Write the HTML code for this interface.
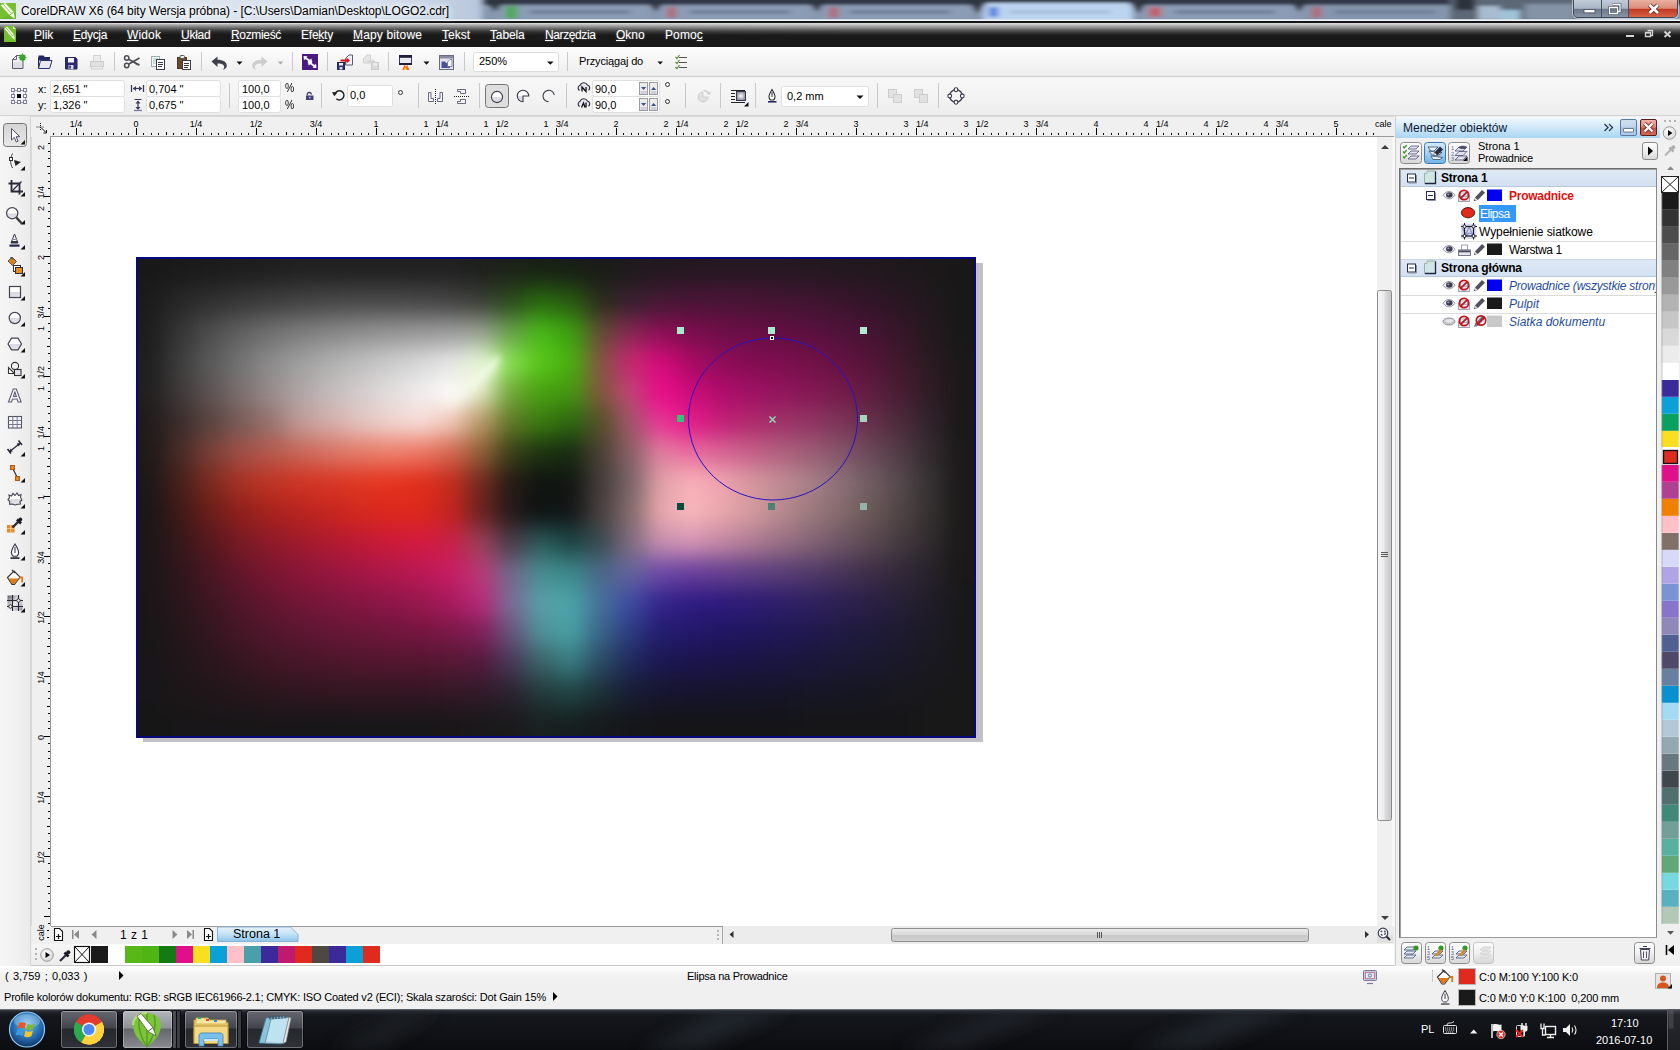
<!DOCTYPE html>
<html lang="pl"><head><meta charset="utf-8"><title>CorelDRAW X6</title>
<style>
html,body{margin:0;padding:0;background:#f0f0f0;}
body{width:1680px;height:1050px;overflow:hidden;font-family:"Liberation Sans",sans-serif;font-size:12px;color:#000;}
#root{position:relative;width:1680px;height:1050px;overflow:hidden;background:#f0f0f0;}
.abs{position:absolute;}
#root div,#root span,#root svg{position:absolute;box-sizing:border-box;}
.t{white-space:nowrap;line-height:1;}
.mi{top:7px;font-size:12px;color:#fff;text-shadow:0 0 2px rgba(255,255,255,0.35);}
.mi u{text-decoration:underline;text-underline-offset:1px;}
.rl{font-size:9px;color:#000;height:9px;word-spacing:5px;}
.tt{font-size:11px;color:#000;}
.tr{font-size:12px;color:#000;}

</style></head>
<body>
<div id="root">
<!-- titlebar.html -->
<div id="titlebar" style="left:0;top:0;width:1680px;height:22px;overflow:hidden;background:#8c9db6;">
  <!-- blurred browser tabs behind aero glass -->
  <svg width="1680" height="22" style="left:0;top:0" viewBox="0 0 1680 22">
    <defs>
      <filter id="tb" x="-5%" y="-50%" width="110%" height="200%"><feGaussianBlur stdDeviation="3 1.6"/></filter>
      <linearGradient id="tleft" x1="0" x2="1"><stop offset="0" stop-color="#e3e9f2"/><stop offset="0.8" stop-color="#d3deec"/><stop offset="1" stop-color="#b7c6db"/></linearGradient>
    </defs>
    <rect x="0" y="0" width="1680" height="22" fill="#8797b0"/>
    <g filter="url(#tb)">
      <rect x="470" y="-5" width="1220" height="10" fill="#313946"/>
      <rect x="-10" y="-4" width="492" height="30" fill="url(#tleft)"/>
      <rect x="500" y="5" width="150" height="20" fill="#8b9cb6"/>
      <rect x="661" y="5" width="150" height="20" fill="#8b9cb6"/>
      <rect x="822" y="5" width="150" height="20" fill="#8b9cb6"/>
      <rect x="983" y="3" width="150" height="22" fill="#bcd4f0"/>
      <rect x="1144" y="5" width="150" height="20" fill="#8b9cb6"/>
      <rect x="1305" y="5" width="145" height="20" fill="#8595ad"/>
      <polygon points="484,-2 506,-2 496,12" fill="#2e3540"/>
      <polygon points="645,-2 667,-2 656,12" fill="#2e3540"/>
      <polygon points="806,-2 828,-2 817,12" fill="#2e3540"/>
      <polygon points="966,-2 990,-2 978,14" fill="#2e3540"/>
      <polygon points="1126,-2 1150,-2 1138,14" fill="#2e3540"/>
      <polygon points="1288,-2 1310,-2 1299,12" fill="#2e3540"/>
      <rect x="1450" y="-2" width="130" height="26" fill="#5d6877"/>
      <rect x="1455" y="-4" width="20" height="14" fill="#2b313b"/>
      <rect x="1478" y="6" width="22" height="14" fill="#a9bccf"/>
      <rect x="1500" y="10" width="20" height="12" fill="#9fc3d8"/>
      <rect x="1525" y="4" width="50" height="16" fill="#8493a6"/>
      <rect x="505" y="6" width="13" height="13" fill="#55a860"/>
      <rect x="667" y="7" width="9" height="11" fill="#b06a78"/>
      <rect x="829" y="7" width="9" height="11" fill="#b06a78"/>
      <rect x="989" y="7" width="9" height="10" fill="#4f7fdc"/>
      <rect x="1149" y="7" width="12" height="10" fill="#c0626a"/>
      <rect x="1312" y="7" width="9" height="11" fill="#b06a78"/>
      <rect x="530" y="10" width="100" height="4" fill="#6f7f99"/>
      <rect x="690" y="10" width="100" height="4" fill="#6f7f99"/>
      <rect x="850" y="10" width="100" height="4" fill="#6f7f99"/>
      <rect x="1010" y="10" width="100" height="4" fill="#a7bfdc"/>
      <rect x="1175" y="10" width="100" height="4" fill="#6f7f99"/>
      <rect x="1335" y="10" width="100" height="4" fill="#6f7f99"/>
    </g>
    <rect x="0" y="19" width="1680" height="1" fill="#dfe6ef" opacity="0.850"/>
    <rect x="0" y="20" width="1680" height="1" fill="#f1f5f9"/>
    <rect x="0" y="21" width="1680" height="1" fill="#131518"/>
  </svg>
  <!-- app icon -->
  <svg width="17" height="17" style="left:0;top:3px" viewBox="0 0 17 17">
    <rect x="0" y="0" width="16" height="16" fill="#74c02f"/>
    <path d="M0 16L16 16L16 9z" fill="#69b52b"/>
    <path d="M0.700 2.200L5.200 0.100L13.600 8.900L9.300 11.800z" fill="#fbfff4"/>
    <path d="M9.800 12.600L13.900 9.700L14.800 15.600z" fill="#fbfff4"/>
    <path d="M3 1.200L11.500 10.300" stroke="#74c02f" stroke-width="0.900"/>
  </svg>
  <span class="t" id="titletext" style="left:21px;top:5px;font-size:12px;color:#000;text-shadow:0 0 6px #fff,0 0 8px #fff,0 0 10px #fff;letter-spacing:-0.047px;">CorelDRAW X6 (64 bity Wersja próbna) - [C:\Users\Damian\Desktop\LOGO2.cdr]</span>
  <!-- window buttons -->
  <div style="left:1573px;top:-1px;width:105px;height:19px;border:1px solid #3d4652;border-radius:0 0 5px 5px;overflow:hidden;box-shadow:0 0 0 1px rgba(255,255,255,0.500);">
    <div style="left:0;top:0;width:28px;height:18px;background:linear-gradient(#c2ccd9 0%,#a9b5c6 46%,#6d798a 52%,#8b98aa 100%);border-right:1px solid #46505e;"></div>
    <div style="left:28px;top:0;width:27px;height:18px;background:linear-gradient(#c2ccd9 0%,#a9b5c6 46%,#6d798a 52%,#8b98aa 100%);border-right:1px solid #46505e;"></div>
    <div style="left:55px;top:0;width:49px;height:18px;background:linear-gradient(#e9b1a3 0%,#dc8a76 46%,#c23a24 52%,#d8694a 100%);"></div>
    <svg width="105" height="19" style="left:-1px;top:0" viewBox="1573 -1 105 19">
      <rect x="1584" y="8.500" width="11" height="3.400" fill="#fff" stroke="#4a5362" stroke-width="0.900"/>
      <path d="M1612.500 3.500h7.500v7h-2.500M1609.500 6.500h8v6h-8z" fill="none" stroke="#444d5a" stroke-width="2.600"/>
      <path d="M1612.500 3.500h7.500v7h-2.500M1609.500 6.500h8v6h-8z" fill="none" stroke="#fff" stroke-width="1.300"/>
      <path d="M1649.500 4l8.500 8M1658 4l-8.500 8" stroke="#5b2a22" stroke-width="4.400" stroke-linecap="butt"/>
      <path d="M1649.500 4l8.500 8M1658 4l-8.500 8" stroke="#fff" stroke-width="2.700" stroke-linecap="butt"/>
    </svg>
  </div>
</div>

<!-- menubar.html -->
<div id="menubar" style="left:0;top:22px;width:1680px;height:25px;background:#191919;">
  <div style="left:0;top:0;width:1680px;height:13px;background:linear-gradient(#141414 0px,#141414 0.9px,#e2e2e2 1px,#d0d0d0 1.9px,#b0b0b0 2.5px,#8c8c8c 4px,#646464 6px,#404040 8px,#282828 10px,#1c1c1c 12px,#191919 13px);"></div>
  <div style="left:0;top:2px;width:1680px;height:12px;background:linear-gradient(rgba(235,235,235,0.500) 0px,rgba(200,200,200,0.400) 3px,rgba(150,150,150,0.250) 7px,rgba(80,80,80,0) 12px);-webkit-mask-image:linear-gradient(90deg,rgba(0,0,0,0) 0,rgba(0,0,0,0.300) 25%,#000 50%,#000 100%);mask-image:linear-gradient(90deg,rgba(0,0,0,0) 0,rgba(0,0,0,0.300) 25%,#000 50%,#000 100%);"></div>
  <svg width="13" height="17" style="left:4px;top:4px" viewBox="0 0 13 17">
    <path d="M0 0h9l3 3v13H0z" fill="#74c02f"/>
    <path d="M9 0l3 3h-3z" fill="#d8efc0"/>
    <path d="M0.500 2.600L3.100 0.700L9.800 8.300L6.700 10.200z" fill="#fbfff4"/>
    <path d="M7.200 10.900L10.100 8.900L10.800 13.800z" fill="#fbfff4"/>
    <path d="M1.900 1.700L8.300 9.200" stroke="#74c02f" stroke-width="0.800"/>
  </svg>
  <span class="t mi" style="left:34px"><u>P</u>lik</span>
  <span class="t mi" style="left:73px;letter-spacing:-0.33px"><u>E</u>dycja</span>
  <span class="t mi" style="left:127px;letter-spacing:0.14px"><u>W</u>idok</span>
  <span class="t mi" style="left:181px;letter-spacing:-0.24px"><u>U</u>kład</span>
  <span class="t mi" style="left:231px;letter-spacing:-0.34px"><u>R</u>ozmieść</span>
  <span class="t mi" style="left:301px;letter-spacing:-0.23px">Efe<u>k</u>ty</span>
  <span class="t mi" style="left:353px;letter-spacing:0.15px"><u>M</u>apy bitowe</span>
  <span class="t mi" style="left:442px"><u>T</u>ekst</span>
  <span class="t mi" style="left:490px;letter-spacing:-0.15px"><u>T</u>abela</span>
  <span class="t mi" style="left:545px;letter-spacing:-0.39px"><u>N</u>arzędzia</span>
  <span class="t mi" style="left:616px"><u>O</u>kno</span>
  <span class="t mi" style="left:665px;letter-spacing:0.1px">Pomo<u>c</u></span>
  <svg width="60" height="14" style="left:1620px;top:4px" viewBox="0 0 60 14">
    <rect x="6" y="9" width="8" height="2" fill="#d4d4d4"/>
    <path d="M27.500 4.500h5v5h-1.500M25.500 6.500h5v4h-5z" fill="none" stroke="#d4d4d4" stroke-width="1.300"/>
    <rect x="25" y="6" width="6" height="1.500" fill="#d4d4d4"/>
    <path d="M44.500 5.500l6 5.500M50.500 5.500l-6 5.500" stroke="#d4d4d4" stroke-width="1.900"/>
  </svg>
</div>

<!-- toolbar.html -->
<div id="toolbar" style="left:0;top:47px;width:1680px;height:30px;background:linear-gradient(#fdfdfd 0%,#f6f6f6 45%,#ececec 100%);border-bottom:1px solid #cfcfcf;"></div>
<svg id="tbicons" width="720" height="30" style="left:0;top:47px" viewBox="0 47 720 30">
  <defs>
    <linearGradient id="gPaper" x1="0" y1="0" x2="0" y2="1"><stop offset="0" stop-color="#ffffff"/><stop offset="1" stop-color="#d9d9e4"/></linearGradient>
  </defs>
  <!-- separators -->
  <g stroke="#c9c9c9" stroke-width="1" shape-rendering="crispEdges">
    <path d="M114.5 52v19M201.5 52v19M292.5 52v19M327.5 52v19M388.5 52v19M464.5 52v19M567.5 52v19"/>
  </g>
  <!-- new -->
  <path d="M12.5 59.5l4-4h6.5v13h-10.5z" fill="url(#gPaper)" stroke="#5d5d6b" stroke-width="1"/>
  <path d="M12.5 59.5h4v-4" fill="none" stroke="#5d5d6b" stroke-width="1"/>
  <rect x="13.5" y="62" width="8.5" height="6" fill="#dcdce6" opacity="0.8"/>
  <circle cx="22.5" cy="57.5" r="3.1" fill="#2f9a21"/>
  <path d="M22.5 53.6v7.8M18.6 57.5h7.8M19.8 54.8l5.4 5.4M25.2 54.8l-5.4 5.4" stroke="#3aa52a" stroke-width="1.1"/>
  <!-- open -->
  <path d="M38.5 57v-1.5h5l1.2 1.5h5.3v2.5h-11.5z" fill="#1f2558"/>
  <path d="M38.5 57.5h11v3h-11z" fill="#252c66"/>
  <path d="M38.5 68.5v-11" stroke="#1f2558" stroke-width="1"/>
  <path d="M40.5 60.5h11.5l-2.4 8h-11.1z" fill="#e9e9f0" stroke="#2b3270" stroke-width="1"/>
  <!-- save -->
  <path d="M65.5 57.5h10l1.5 1.5v10h-11.5z" fill="#2a2d74" stroke="#23265f" stroke-width="1"/>
  <rect x="68" y="58" width="6" height="4.5" fill="#f4f4fa"/>
  <rect x="68.5" y="65" width="5" height="4" fill="#d6d6e2"/>
  <rect x="69.2" y="65.6" width="1.6" height="3" fill="#2a2d74"/>
  <!-- print (disabled) -->
  <g opacity="0.9">
    <rect x="93.5" y="55.5" width="7" height="6" fill="#ececec" stroke="#cfcfcf"/>
    <rect x="90.5" y="61.5" width="13" height="5" fill="#dedede" stroke="#c8c8c8"/>
    <rect x="91.5" y="66.5" width="11" height="2.5" fill="#ececec" stroke="#cfcfcf"/>
  </g>
  <!-- cut -->
  <g fill="none" stroke="#4d4d55" stroke-width="1.5">
    <circle cx="126.7" cy="58" r="2.2"/><circle cx="126.7" cy="65.5" r="2.2"/>
  </g>
  <path d="M128.5 59.2l11 5.8M128.5 64.3l11-6.3" stroke="#4d4d55" stroke-width="1.6" fill="none"/>
  <path d="M131.5 61.8l8 3.7-2.5-.2z" fill="#4d4d55"/>
  <!-- copy -->
  <rect x="151.5" y="56.5" width="8" height="10" fill="#f2f5f5" stroke="#9fb0b5"/>
  <path d="M153 59h5M153 61h5M153 63h5" stroke="#a9c8c3" stroke-width="1"/>
  <rect x="156.5" y="59.500" width="8" height="10" fill="#ffffff" stroke="#3c3c46"/>
  <path d="M158 62.5h5M158 64.500h5M158 66.500h4" stroke="#3c3c46" stroke-width="1"/>
  <!-- paste -->
  <rect x="177.500" y="57.500" width="9" height="11" fill="#6a4a2b" stroke="#4e3520"/>
  <rect x="180" y="55.500" width="4.500" height="3" rx="1" fill="#e9e9e9" stroke="#555"/>
  <rect x="182.500" y="60.500" width="8" height="9" fill="#ffffff" stroke="#3c3c46"/>
  <path d="M184 63.500h5M184 65.500h5M184 67.500h4" stroke="#3c3c46" stroke-width="1"/>
  <!-- undo -->
  <path d="M211.500 61.500l6-5v3.200c5.500 0 9.300 2.300 9.300 6 0 2-1.500 3.600-4.300 4.200 1.300-1 1.700-1.900 1.700-3 0-2-2-3.300-6.700-3.300v3.300z" fill="#40404c"/>
  <path d="M236.500 61.500h6l-3 3.200z" fill="#111"/>
  <!-- redo disabled -->
  <path d="M267.500 61.500l-6-5v3.200c-5.500 0-9.300 2.300-9.300 6 0 2 1.500 3.600 4.300 4.200-1.300-1-1.700-1.900-1.700-3 0-2 2-3.300 6.700-3.300v3.300z" fill="#cdcdcd"/>
  <path d="M277.800 61.500h5.400l-2.700 3z" fill="#a8a8a8"/>
  <!-- purple icon -->
  <rect x="302" y="54" width="16" height="16" fill="#4a1a80"/>
  <path d="M303.500 56l4 .3-1 1.200 3.300 2.200 1.700-1.300.6 4.800-4.700-.5 1.300-1.500-3.300-2.300-1.400 1.300z" fill="#fff"/>
  <path d="M316.500 68l-4-.3 1-1.200-3.300-2.200-1.700 1.300-.6-4.800 4.700.5-1.300 1.500 3.300 2.300 1.400-1.300z" fill="#fff"/>
  <!-- import -->
  <path d="M345.500 58.500l3.500-3.500h3.500v10h-7z" fill="#f4f4f8" stroke="#5b5b72"/>
  <rect x="337.500" y="62.500" width="7" height="7" fill="#2a2d74" stroke="#23265f"/>
  <rect x="339" y="63" width="4" height="2.500" fill="#f0f0f6"/>
  <rect x="339.500" y="67" width="3" height="2.500" fill="#d6d6e2"/>
  <path d="M340.500 59.500h6v-2l3.500 3-3.500 3v-2h-6z" fill="#d9141c"/>
  <!-- export disabled -->
  <g opacity="0.85">
    <path d="M363.500 58.500l3.500-3.500h3.500v8h-7z" fill="#e3e3e3" stroke="#cbcbcb"/>
    <rect x="371.500" y="62.500" width="7" height="7" fill="#d4d4d4" stroke="#c6c6c6"/>
    <rect x="373" y="63" width="4" height="2.500" fill="#efefef"/>
    <path d="M367.500 60.500h5v-2l3 3-3 3v-2h-5z" fill="#cfcfcf"/>
  </g>
  <!-- app launcher -->
  <rect x="399.500" y="55.500" width="12" height="9" fill="#e9e9f2" stroke="#3b3b52"/>
  <rect x="399" y="55" width="13" height="2.800" fill="#1d1d3a"/>
  <rect x="399" y="63" width="13" height="2" fill="#1d1d3a"/>
  <path d="M402.500 70c0-2.500 1.500-3 2-5.500 1 1.200 1.200 1.800 1.300 2.500.5-.8.800-1.200 1.700-2 .2 2.500 1.700 3 1.700 5z" fill="#f26a1b"/>
  <path d="M404 70c0-1.500.8-2 1.400-3 .5 1 1.300 1.500 1.300 3z" fill="#ffd23c"/>
  <path d="M423.500 61.500h6l-3 3.200z" fill="#111"/>
  <!-- welcome -->
  <rect x="439.500" y="55.500" width="14" height="14" fill="#e4e4ee" stroke="#6b6b80"/>
  <rect x="440" y="56" width="13" height="2.500" fill="#8a8aa0"/>
  <path d="M441.500 61.500h3.500l1 1.500h4v5h-8.500z" fill="#4a4f9a"/>
  <path d="M447.500 62l2.500-2.500h2v7h-4.500z" fill="#f6f6fa" stroke="#6b6b80" stroke-width="0.8"/>
  <!-- zoom combo -->
  <rect x="473.500" y="52.500" width="85" height="19" rx="2" fill="#fff" stroke="#dcdcdc"/>
  <path d="M547 61.500h6.600l-3.300 3.300z" fill="#111"/>
  <!-- snap arrow -->
  <path d="M657.500 61.500h5.400l-2.700 3z" fill="#111"/>
  <!-- checklist -->
  <g stroke="#555" stroke-width="1" shape-rendering="crispEdges"><path d="M679 57.500h8M679 62.500h8M679 67.500h8"/></g>
  <g stroke="#5c8a3a" stroke-width="1.200" fill="none"><path d="M675.500 57l1.500 1.500 2.500-3.500M675.500 62l1.500 1.500 2.500-3.500M675.500 67l1.500 1.500 2.500-3.500"/></g>
</svg>
<span class="t tt" style="left:479px;top:56px;">250%</span>
<span class="t tt" id="snaptxt" style="left:579px;top:56px;letter-spacing:-0.15px;">Przyciągaj do</span>

<!-- propbar.html -->
<div id="propbar" style="left:0;top:78px;width:1680px;height:38px;background:linear-gradient(#f7f7f7 0%,#f3f3f3 50%,#ededed 100%);border-bottom:1px solid #d2d2d2;"></div>
<svg id="pbicons" width="1000" height="38" style="left:0;top:78px" viewBox="0 78 1000 38">
  <g stroke="#c9c9c9" stroke-width="1" shape-rendering="crispEdges">
    <path d="M229.500 83v25M321.500 83v25M418.500 83v25M479.500 83v25M566.500 83v25M685.500 83v25M720.500 83v25M755.500 83v25M877.500 83v25M938.500 83v25"/>
  </g>
  <!-- origin grid icon -->
  <g fill="#fff" stroke="#7c7c96" stroke-width="1" shape-rendering="crispEdges">
    <rect x="11.500" y="88.500" width="3" height="3"/><rect x="17.500" y="88.500" width="3" height="3"/><rect x="23.500" y="88.500" width="3" height="3"/>
    <rect x="11.500" y="94.500" width="3" height="3"/><rect x="23.500" y="94.500" width="3" height="3"/>
    <rect x="11.500" y="100.500" width="3" height="3"/><rect x="17.500" y="100.500" width="3" height="3"/><rect x="23.500" y="100.500" width="3" height="3"/>
  </g>
  <g stroke="#9a9ab0" stroke-width="1" shape-rendering="crispEdges"><path d="M15 90h2M21 90h2M15 102h2M21 102h2M13 92v2M13 98v2M25 92v2M25 98v2"/></g>
  <rect x="17" y="94" width="4" height="4" fill="#000"/>
  <!-- fields -->
  <g fill="#fff" stroke="#dfdfdf" stroke-width="1">
    <rect x="50.500" y="80.500" width="74" height="16" rx="2"/><rect x="50.500" y="96.500" width="74" height="16" rx="2"/>
    <rect x="146.500" y="80.500" width="74" height="16" rx="2"/><rect x="146.500" y="96.500" width="74" height="16" rx="2"/>
    <rect x="238.500" y="80.500" width="42" height="16" rx="2"/><rect x="238.500" y="96.500" width="42" height="16" rx="2"/>
    <rect x="347.500" y="85.500" width="45" height="21" rx="2"/>
    <rect x="592.500" y="80.500" width="67" height="16" rx="2"/><rect x="592.500" y="96.500" width="67" height="16" rx="2"/>
    <rect x="781.500" y="86.500" width="87" height="20" rx="2"/>
  </g>
  <!-- width / height icons -->
  <g stroke="#3a3a5a" stroke-width="1.200" fill="#3a3a5a">
    <path d="M131.500 85v7M143.500 85v7" stroke-width="1.300"/>
    <path d="M133 88.500h9" />
    <path d="M133 88.500l3-2.500v5zM142 88.500l-3-2.500v5z" stroke="none"/>
    <path d="M138 102v7" />
    <path d="M138 100.500l-2.500 3h5zM138 110l-2.500-3h5z" stroke="none"/>
  </g>
  <path d="M134.500 99.500h7" stroke="#3a3a5a" stroke-width="1"/>
  <path d="M134 110.500h8" stroke="#7a7aa8" stroke-width="1.300"/>
  <!-- lock -->
  <rect x="306" y="95.500" width="7.500" height="4.500" fill="#45427a"/>
  <path d="M307.300 95.500v-1a2 2 0 0 1 4 0" fill="none" stroke="#45427a" stroke-width="1.300"/>
  <rect x="309" y="96.800" width="1.400" height="1.600" fill="#c8c8e8"/>
  <!-- rotate -->
  <path d="M334.800 94.500a4.600 4.600 0 1 1 1.500 4.300" fill="none" stroke="#222" stroke-width="1.400"/>
  <path d="M332 92l5.500.4-3.300 3.800z" fill="#222"/>
  <!-- mirror H -->
  <g fill="#f4f4fa" stroke="#6a6a82" stroke-width="1"><path d="M428.500 92.500h2.500v6h2.500v3h-5zM442.500 92.500h-2.500v6h-2.500v3h5z"/></g>
  <path d="M435.500 89v16" stroke="#222" stroke-width="1" stroke-dasharray="1 1" shape-rendering="crispEdges"/>
  <!-- mirror V -->
  <g fill="#f4f4fa" stroke="#6a6a82" stroke-width="1"><path d="M457.500 89.500h8v4h-5v-2h-3zM457.500 103.500h8v-4h-5v2h-3z"/></g>
  <path d="M454 96.500h16" stroke="#222" stroke-width="1" stroke-dasharray="1 1" shape-rendering="crispEdges"/>
  <!-- ellipse / pie / arc -->
  <defs><linearGradient id="gBall" x1="0" y1="0" x2="0" y2="1"><stop offset="0.500" stop-color="#fff"/><stop offset="0.520" stop-color="#dcdce6"/></linearGradient></defs>
  <rect x="485.500" y="84.500" width="23" height="23" rx="3" fill="#dedede" stroke="#777"/>
  <circle cx="497" cy="97" r="5.600" fill="url(#gBall)" stroke="#3a3a46" stroke-width="1.100"/>
  <path d="M523 96h5.700a5.700 5.700 0 1 0-5.700 5.700z" fill="url(#gBall)" stroke="#3a3a46" stroke-width="1.100"/>
  <path d="M554.300 95a5.700 5.700 0 1 0-5.700 6.700" fill="none" stroke="#3a3a46" stroke-width="1.100"/>
  <!-- angle icons -->
  <g fill="#e6e6f0" stroke="#2a2a3a" stroke-width="1.100">
    <path d="M579.500 90.500a3 3 0 0 1 .5-5.300 4.200 4.200 0 0 1 7.500-.2 3 3 0 0 1 1 5.300"/>
    <path d="M579.500 106.500a3 3 0 0 1 .5-5.300 4.200 4.200 0 0 1 7.500-.2 3 3 0 0 1 1 5.300"/>
  </g>
  <path d="M582 91.500v-4.500l4 4.500v-4.500" fill="none" stroke="#111" stroke-width="1.300"/>
  <path d="M581.500 107.500l2-4.500 1.500 4.500 M586 107.500v-5" fill="none" stroke="#111" stroke-width="1.300"/>
  <!-- spinners -->
  <g fill="#ececec" stroke="#9c9c9c" stroke-width="1" shape-rendering="crispEdges">
    <rect x="639.500" y="82.500" width="8" height="12"/><rect x="649.500" y="82.500" width="8" height="12"/>
    <rect x="639.500" y="98.500" width="8" height="12"/><rect x="649.500" y="98.500" width="8" height="12"/>
  </g>
  <g fill="#3c50a0">
    <path d="M641 87h5.200l-2.600 3zM651 90h5.200l-2.600-3zM641 103h5.200l-2.600 3zM651 106h5.200l-2.600-3z"/>
  </g>
  <g fill="#d0d0dc"><rect x="640.500" y="91" width="6" height="3"/><rect x="650.500" y="91" width="6" height="3"/><rect x="640.500" y="107" width="6" height="3"/><rect x="650.500" y="107" width="6" height="3"/></g>
  <!-- degree marks -->
  <g fill="none" stroke="#333" stroke-width="1"><circle cx="400.500" cy="92.500" r="2"/><circle cx="667.500" cy="84.500" r="2"/><circle cx="667.500" cy="101.500" r="2"/></g>
  <!-- direction (disabled) -->
  <g fill="#e0e0e0" stroke="#cfcfcf" stroke-width="1"><path d="M703 97v-5a5 5 0 1 0 5 5z"/></g>
  <path d="M703.500 90.500a6 6 0 0 1 5.500 4" fill="none" stroke="#cfcfcf" stroke-width="1.400"/><path d="M707 94.500h3.500v-3.500z" fill="#cfcfcf"/>
  <!-- wrap icon -->
  <defs><radialGradient id="gWrap"><stop offset="0" stop-color="#fff"/><stop offset="1" stop-color="#8c8ca0"/></radialGradient></defs>
  <g stroke="#222" stroke-width="1" shape-rendering="crispEdges"><path d="M731 90.500h14M731 93.500h4M731 96.500h4M731 99.500h4M731 102.500h14"/></g>
  <rect x="736.500" y="91.500" width="9" height="9" fill="url(#gWrap)" stroke="#3a3a4a"/>
  <path d="M748.500 102v4.500h-4.500z" fill="#111"/>
  <!-- outline pen -->
  <path d="M772 89.500c-1.800 3-3 5-3 7.300 0 1.500.8 2.700 1.500 3.200h3c.7-.5 1.500-1.700 1.500-3.200 0-2.300-1.200-4.300-3-7.300z" fill="#fff" stroke="#2a2a3a" stroke-width="1.100"/>
  <path d="M772 92v5" stroke="#2a2a3a" stroke-width="1"/>
  <rect x="768" y="101" width="8.500" height="1.600" fill="#2a2a6a"/>
  <path d="M856.500 95.500h7l-3.500 3.600z" fill="#111"/>
  <!-- order icons (disabled) -->
  <g fill="#e2e2e2" stroke="#cdcdcd" stroke-width="1">
    <rect x="888.500" y="89.500" width="8" height="8"/><rect x="893.500" y="94.500" width="8" height="8"/>
    <rect x="914.500" y="89.500" width="8" height="8"/><rect x="919.500" y="94.500" width="8" height="8"/>
  </g>
  <!-- convert to curves -->
  <circle cx="956" cy="96" r="6.300" fill="none" stroke="#3a3a4a" stroke-width="1.300"/>
  <g fill="#fff" stroke="#3a3a4a" stroke-width="1.100"><circle cx="956" cy="89.700" r="1.900"/><circle cx="956" cy="102.300" r="1.900"/><circle cx="949.700" cy="96" r="1.900"/><circle cx="962.300" cy="96" r="1.900"/></g>
</svg>
<span class="t tt" style="left:38px;top:84px;">x:</span>
<span class="t tt" style="left:38px;top:100px;">y:</span>
<span class="t tt" style="left:53px;top:84px;">2,651 "</span>
<span class="t tt" style="left:53px;top:100px;">1,326 "</span>
<span class="t tt" style="left:149px;top:84px;">0,704 "</span>
<span class="t tt" style="left:149px;top:100px;">0,675 "</span>
<span class="t tt" style="left:242px;top:84px;">100,0</span>
<span class="t tt" style="left:242px;top:100px;">100,0</span>
<span class="t" style="left:285px;top:81px;font-size:13px;transform:scaleX(0.8);transform-origin:0 0;">%</span>
<span class="t" style="left:285px;top:98px;font-size:13px;transform:scaleX(0.8);transform-origin:0 0;">%</span>
<span class="t tt" style="left:350px;top:90px;">0,0</span>
<span class="t tt" style="left:595px;top:84px;">90,0</span>
<span class="t tt" style="left:595px;top:100px;">90,0</span>
<span class="t tt" style="left:787px;top:91px;">0,2 mm</span>

<!-- toolbox.html -->
<div id="toolbox" style="left:0;top:116px;width:31px;height:850px;background:linear-gradient(90deg,#f6f6f6,#f0f0f0 60%,#ebebeb);border-right:1px solid #d6d6d6;"></div>
<svg id="tools" width="31" height="520" style="left:0;top:116px" viewBox="0 116 31 520">
  <defs>
    <linearGradient id="gHalf" x1="0" y1="0" x2="0" y2="1"><stop offset="0.500" stop-color="#ffffff"/><stop offset="0.540" stop-color="#d9d9e3"/><stop offset="1" stop-color="#e6e6ee"/></linearGradient>
    <linearGradient id="gSel" x1="0" y1="0" x2="0" y2="1"><stop offset="0" stop-color="#d4d4d4"/><stop offset="1" stop-color="#e8e8e8"/></linearGradient>
  </defs>
  <!-- pick (selected) -->
  <rect x="3.500" y="123.500" width="23" height="23" rx="3" fill="url(#gSel)" stroke="#757575"/>
  <path d="M11.500 128.500v11.500l2.800-2.600 2 4.600 1.800-.8-2-4.500h3.700z" fill="#fff" stroke="#50506a" stroke-width="1"/>
  <!-- flyout triangles -->
  <g fill="#111">
    <path d="M25 140v4.500h-4.500z"/><path d="M25 166v4.500h-4.500z"/><path d="M25 192v4.500h-4.500z"/><path d="M25 220v4.500h-4.500z"/>
    <path d="M25 245v4.500h-4.500z"/><path d="M25 272v4.500h-4.500z"/><path d="M25 296v4.500h-4.500z"/><path d="M25 322v4.500h-4.500z"/>
    <path d="M25 348v4.500h-4.500z"/><path d="M25 374v4.500h-4.500z"/>
    <path d="M25 452v4.500h-4.500z"/><path d="M25 478v4.500h-4.500z"/><path d="M25 504v4.500h-4.500z"/><path d="M25 530v4.500h-4.500z"/>
    <path d="M25 556v4.500h-4.500z"/><path d="M25 582v4.500h-4.500z"/><path d="M25 608v4.500h-4.500z"/>
  </g>
  <!-- shape tool -->
  <path d="M12.500 153.500c-2.500 4.500-2.500 10 0 14.500" fill="none" stroke="#444" stroke-width="1"/>
  <rect x="9.500" y="157.500" width="3" height="3" fill="#fff" stroke="#333"/>
  <path d="M14 160l7 2-5.500 4z" fill="#222"/>
  <!-- crop -->
  <path d="M11.500 180v11.500h11.500M8.500 183.500h11v11" fill="none" stroke="#2a2a38" stroke-width="1.800"/>
  <path d="M12 191l9.500-9.500" stroke="#2a2a38" stroke-width="1.300"/>
  <!-- zoom -->
  <circle cx="12.200" cy="213.200" r="5.600" fill="url(#gHalf)" stroke="#444450" stroke-width="1.200"/>
  <path d="M16.300 217.500l5.500 6" stroke="#333" stroke-width="2.200"/>
  <!-- freehand -->
  <path d="M14.500 234l-3.500 9h7z" fill="#fff" stroke="#333345" stroke-width="1"/>
  <path d="M11.800 241h5.400l.8 2h-7z" fill="#333345"/>
  <rect x="9.500" y="244.500" width="10" height="2.200" fill="#26264a"/>
  <path d="M12 239.500h5" stroke="#8a8aa0" stroke-width="1"/>
  <!-- smart fill -->
  <path d="M8 261l4-4 4.500 4.500-4 4z" fill="#d8801e" stroke="#4a4a55" stroke-width="0.900"/>
  <path d="M10.500 257l2.500 2.500" stroke="#333" stroke-width="1"/>
  <rect x="13.500" y="265.500" width="7" height="6" fill="#fff" stroke="#333"/>
  <rect x="15.500" y="267.500" width="7" height="6" fill="#e88a24" stroke="#333"/>
  <!-- rectangle -->
  <rect x="9.500" y="286.500" width="11" height="11" fill="url(#gHalf)" stroke="#444450" stroke-width="1.200"/>
  <!-- ellipse -->
  <circle cx="14.800" cy="318" r="5.600" fill="url(#gHalf)" stroke="#444450" stroke-width="1.200"/>
  <!-- polygon -->
  <path d="M8 344l3.500-5.800h6.500l3.500 5.800-3.500 5.800h-6.500z" fill="url(#gHalf)" stroke="#444450" stroke-width="1.200"/>
  <!-- basic shapes -->
  <path d="M8.500 367.500v6h6z" fill="#fff" stroke="#333" stroke-width="1.100"/>
  <circle cx="15" cy="366" r="3.600" fill="#f4f4f8" stroke="#333" stroke-width="1.100"/>
  <rect x="14.500" y="369.500" width="6.500" height="6" fill="#e4e4ee" stroke="#333" stroke-width="1.100"/>
  <!-- text A -->
  <path d="M8.500 402l4.800-13h3l4.800 13h-3l-1-3h-4.600l-1 3zM13.400 396.500h3l-1.500-4.500z" fill="#fff" stroke="#5a5a72" stroke-width="1.100" fill-rule="evenodd"/>
  <!-- table -->
  <rect x="8.500" y="416.500" width="13" height="11.500" fill="#f4f4fa" stroke="#55556a" stroke-width="1.100"/>
  <path d="M8.500 420.500h13M8.500 424.500h13M12.800 416.500v11.500M17.200 416.500v11.500" stroke="#77778c" stroke-width="1"/>
  <!-- dimension -->
  <path d="M9 452l11.500-9" stroke="#2a2a3a" stroke-width="1.300"/>
  <path d="M7.500 449l3.500 4.500M18.500 440.500l3.500 4.500" stroke="#2a2a3a" stroke-width="1.600"/>
  <path d="M9 452l3.800-.6-2.200-2.800zM20.500 443l-3.800.6 2.200 2.800z" fill="#2a2a3a"/>
  <!-- connector -->
  <path d="M12.500 468l5 10" stroke="#333" stroke-width="1.200"/>
  <rect x="10.500" y="465.500" width="4" height="4" fill="#e8882a" stroke="#a85a12"/>
  <rect x="15.500" y="476.500" width="4" height="4" fill="#e8882a" stroke="#a85a12"/>
  <!-- blend / distort -->
  <path d="M9 495l2.500 1 1.500-2.500 2 2 2-2.500 1.500 2.500 2.500-1-.5 3 1.500 2.500-2 1.500.5 2.500-3 .3-2.500.7-2.500-1-3 .2.300-2.500-1.800-2 1.500-2z" fill="url(#gHalf)" stroke="#444455" stroke-width="1.100"/>
  <!-- eyedropper -->
  <rect x="7" y="525" width="7.500" height="7.500" fill="#e88a24"/>
  <path d="M7 528.500h7.500M10.700 525v7.500" stroke="#f6c58a" stroke-width="1"/>
  <path d="M12.500 527.500l6-6" stroke="#2c2c3a" stroke-width="2.400"/>
  <path d="M17 519.500l4 4" stroke="#1a1a24" stroke-width="2.600"/>
  <circle cx="20.300" cy="519.500" r="1.900" fill="#1a1a24"/>
  <!-- outline pen -->
  <path d="M15 544c-2.200 3.600-3.600 6-3.600 8.600 0 1.700 1 3 1.800 3.600h3.600c.8-.6 1.800-1.900 1.800-3.600 0-2.600-1.400-5-3.600-8.600z" fill="#fff" stroke="#333345" stroke-width="1.100"/>
  <path d="M15 547v6" stroke="#333345" stroke-width="1"/>
  <rect x="10.500" y="557.300" width="9" height="1.600" fill="#222"/>
  <!-- fill bucket -->
  <path d="M7.500 577.500l6.500-6.500 6 6-5.500 7.500h-2.500z" fill="#fff" stroke="#333" stroke-width="1.100"/>
  <path d="M8.500 578.500h10.500l-4.700 5.500h-2z" fill="#e07a14"/>
  <path d="M12 570l3 3" stroke="#333" stroke-width="1.100"/>
  <path d="M19.500 577.500h2.700v5" fill="none" stroke="#e07a14" stroke-width="1.800"/>
  <!-- mesh fill -->
  <defs><linearGradient id="gMesh" x1="0" y1="0" x2="1" y2="1"><stop offset="0" stop-color="#5a5a66"/><stop offset="0.500" stop-color="#f4f4f8"/><stop offset="1" stop-color="#8a8a98"/></linearGradient></defs>
  <rect x="7.500" y="595.500" width="15" height="15" fill="url(#gMesh)"/>
  <path d="M7 606.500h16M7 600.500h16M12.500 595v16M18.500 595v16" stroke="#2a2a36" stroke-width="1.100"/>
  <circle cx="18.500" cy="600.500" r="1.700" fill="#fff" stroke="#222" stroke-width="1"/>
  <circle cx="10.500" cy="606.500" r="1.700" fill="#fff" stroke="#222" stroke-width="1"/>
</svg>

<!-- rulers.html -->
<div id="hruler" style="left:31px;top:116px;width:1363px;height:21px;background:#f0f0f0;border-top:1px solid #d9d9d9;overflow:hidden;">
<svg width="1363" height="21" style="left:0;top:-1px" viewBox="31 116 1363 21" shape-rendering="crispEdges">
<rect x="50" y="136" width="1344" height="1" fill="#9a9a9a"/>
<rect x="53" y="133" width="1" height="2" fill="#000"/>
<rect x="61" y="133" width="1" height="2" fill="#000"/>
<rect x="68" y="133" width="1" height="2" fill="#000"/>
<rect x="76" y="128" width="1" height="7" fill="#000"/>
<rect x="83" y="133" width="1" height="2" fill="#000"/>
<rect x="91" y="133" width="1" height="2" fill="#000"/>
<rect x="98" y="133" width="1" height="2" fill="#000"/>
<rect x="106" y="132" width="1" height="3" fill="#000"/>
<rect x="113" y="133" width="1" height="2" fill="#000"/>
<rect x="121" y="133" width="1" height="2" fill="#000"/>
<rect x="128" y="133" width="1" height="2" fill="#000"/>
<rect x="136" y="128" width="1" height="7" fill="#000"/>
<rect x="143" y="133" width="1" height="2" fill="#000"/>
<rect x="151" y="133" width="1" height="2" fill="#000"/>
<rect x="158" y="133" width="1" height="2" fill="#000"/>
<rect x="166" y="132" width="1" height="3" fill="#000"/>
<rect x="173" y="133" width="1" height="2" fill="#000"/>
<rect x="181" y="133" width="1" height="2" fill="#000"/>
<rect x="188" y="133" width="1" height="2" fill="#000"/>
<rect x="196" y="128" width="1" height="7" fill="#000"/>
<rect x="203" y="133" width="1" height="2" fill="#000"/>
<rect x="211" y="133" width="1" height="2" fill="#000"/>
<rect x="218" y="133" width="1" height="2" fill="#000"/>
<rect x="226" y="132" width="1" height="3" fill="#000"/>
<rect x="233" y="133" width="1" height="2" fill="#000"/>
<rect x="241" y="133" width="1" height="2" fill="#000"/>
<rect x="248" y="133" width="1" height="2" fill="#000"/>
<rect x="256" y="128" width="1" height="7" fill="#000"/>
<rect x="263" y="133" width="1" height="2" fill="#000"/>
<rect x="271" y="133" width="1" height="2" fill="#000"/>
<rect x="278" y="133" width="1" height="2" fill="#000"/>
<rect x="286" y="132" width="1" height="3" fill="#000"/>
<rect x="293" y="133" width="1" height="2" fill="#000"/>
<rect x="301" y="133" width="1" height="2" fill="#000"/>
<rect x="308" y="133" width="1" height="2" fill="#000"/>
<rect x="316" y="128" width="1" height="7" fill="#000"/>
<rect x="323" y="133" width="1" height="2" fill="#000"/>
<rect x="331" y="133" width="1" height="2" fill="#000"/>
<rect x="338" y="133" width="1" height="2" fill="#000"/>
<rect x="346" y="132" width="1" height="3" fill="#000"/>
<rect x="353" y="133" width="1" height="2" fill="#000"/>
<rect x="361" y="133" width="1" height="2" fill="#000"/>
<rect x="368" y="133" width="1" height="2" fill="#000"/>
<rect x="376" y="128" width="1" height="7" fill="#000"/>
<rect x="383" y="133" width="1" height="2" fill="#000"/>
<rect x="391" y="133" width="1" height="2" fill="#000"/>
<rect x="398" y="133" width="1" height="2" fill="#000"/>
<rect x="406" y="132" width="1" height="3" fill="#000"/>
<rect x="413" y="133" width="1" height="2" fill="#000"/>
<rect x="421" y="133" width="1" height="2" fill="#000"/>
<rect x="428" y="133" width="1" height="2" fill="#000"/>
<rect x="436" y="128" width="1" height="7" fill="#000"/>
<rect x="443" y="133" width="1" height="2" fill="#000"/>
<rect x="451" y="133" width="1" height="2" fill="#000"/>
<rect x="458" y="133" width="1" height="2" fill="#000"/>
<rect x="466" y="132" width="1" height="3" fill="#000"/>
<rect x="473" y="133" width="1" height="2" fill="#000"/>
<rect x="481" y="133" width="1" height="2" fill="#000"/>
<rect x="488" y="133" width="1" height="2" fill="#000"/>
<rect x="496" y="128" width="1" height="7" fill="#000"/>
<rect x="503" y="133" width="1" height="2" fill="#000"/>
<rect x="511" y="133" width="1" height="2" fill="#000"/>
<rect x="518" y="133" width="1" height="2" fill="#000"/>
<rect x="526" y="132" width="1" height="3" fill="#000"/>
<rect x="533" y="133" width="1" height="2" fill="#000"/>
<rect x="541" y="133" width="1" height="2" fill="#000"/>
<rect x="548" y="133" width="1" height="2" fill="#000"/>
<rect x="556" y="128" width="1" height="7" fill="#000"/>
<rect x="563" y="133" width="1" height="2" fill="#000"/>
<rect x="571" y="133" width="1" height="2" fill="#000"/>
<rect x="578" y="133" width="1" height="2" fill="#000"/>
<rect x="586" y="132" width="1" height="3" fill="#000"/>
<rect x="593" y="133" width="1" height="2" fill="#000"/>
<rect x="601" y="133" width="1" height="2" fill="#000"/>
<rect x="608" y="133" width="1" height="2" fill="#000"/>
<rect x="616" y="128" width="1" height="7" fill="#000"/>
<rect x="623" y="133" width="1" height="2" fill="#000"/>
<rect x="631" y="133" width="1" height="2" fill="#000"/>
<rect x="638" y="133" width="1" height="2" fill="#000"/>
<rect x="646" y="132" width="1" height="3" fill="#000"/>
<rect x="653" y="133" width="1" height="2" fill="#000"/>
<rect x="661" y="133" width="1" height="2" fill="#000"/>
<rect x="668" y="133" width="1" height="2" fill="#000"/>
<rect x="676" y="128" width="1" height="7" fill="#000"/>
<rect x="683" y="133" width="1" height="2" fill="#000"/>
<rect x="691" y="133" width="1" height="2" fill="#000"/>
<rect x="698" y="133" width="1" height="2" fill="#000"/>
<rect x="706" y="132" width="1" height="3" fill="#000"/>
<rect x="713" y="133" width="1" height="2" fill="#000"/>
<rect x="721" y="133" width="1" height="2" fill="#000"/>
<rect x="728" y="133" width="1" height="2" fill="#000"/>
<rect x="736" y="128" width="1" height="7" fill="#000"/>
<rect x="743" y="133" width="1" height="2" fill="#000"/>
<rect x="751" y="133" width="1" height="2" fill="#000"/>
<rect x="758" y="133" width="1" height="2" fill="#000"/>
<rect x="766" y="132" width="1" height="3" fill="#000"/>
<rect x="773" y="133" width="1" height="2" fill="#000"/>
<rect x="781" y="133" width="1" height="2" fill="#000"/>
<rect x="788" y="133" width="1" height="2" fill="#000"/>
<rect x="796" y="128" width="1" height="7" fill="#000"/>
<rect x="803" y="133" width="1" height="2" fill="#000"/>
<rect x="811" y="133" width="1" height="2" fill="#000"/>
<rect x="818" y="133" width="1" height="2" fill="#000"/>
<rect x="826" y="132" width="1" height="3" fill="#000"/>
<rect x="833" y="133" width="1" height="2" fill="#000"/>
<rect x="841" y="133" width="1" height="2" fill="#000"/>
<rect x="848" y="133" width="1" height="2" fill="#000"/>
<rect x="856" y="128" width="1" height="7" fill="#000"/>
<rect x="863" y="133" width="1" height="2" fill="#000"/>
<rect x="871" y="133" width="1" height="2" fill="#000"/>
<rect x="878" y="133" width="1" height="2" fill="#000"/>
<rect x="886" y="132" width="1" height="3" fill="#000"/>
<rect x="893" y="133" width="1" height="2" fill="#000"/>
<rect x="901" y="133" width="1" height="2" fill="#000"/>
<rect x="908" y="133" width="1" height="2" fill="#000"/>
<rect x="916" y="128" width="1" height="7" fill="#000"/>
<rect x="923" y="133" width="1" height="2" fill="#000"/>
<rect x="931" y="133" width="1" height="2" fill="#000"/>
<rect x="938" y="133" width="1" height="2" fill="#000"/>
<rect x="946" y="132" width="1" height="3" fill="#000"/>
<rect x="953" y="133" width="1" height="2" fill="#000"/>
<rect x="961" y="133" width="1" height="2" fill="#000"/>
<rect x="968" y="133" width="1" height="2" fill="#000"/>
<rect x="976" y="128" width="1" height="7" fill="#000"/>
<rect x="983" y="133" width="1" height="2" fill="#000"/>
<rect x="991" y="133" width="1" height="2" fill="#000"/>
<rect x="998" y="133" width="1" height="2" fill="#000"/>
<rect x="1006" y="132" width="1" height="3" fill="#000"/>
<rect x="1013" y="133" width="1" height="2" fill="#000"/>
<rect x="1021" y="133" width="1" height="2" fill="#000"/>
<rect x="1028" y="133" width="1" height="2" fill="#000"/>
<rect x="1036" y="128" width="1" height="7" fill="#000"/>
<rect x="1043" y="133" width="1" height="2" fill="#000"/>
<rect x="1051" y="133" width="1" height="2" fill="#000"/>
<rect x="1058" y="133" width="1" height="2" fill="#000"/>
<rect x="1066" y="132" width="1" height="3" fill="#000"/>
<rect x="1073" y="133" width="1" height="2" fill="#000"/>
<rect x="1081" y="133" width="1" height="2" fill="#000"/>
<rect x="1088" y="133" width="1" height="2" fill="#000"/>
<rect x="1096" y="128" width="1" height="7" fill="#000"/>
<rect x="1103" y="133" width="1" height="2" fill="#000"/>
<rect x="1111" y="133" width="1" height="2" fill="#000"/>
<rect x="1118" y="133" width="1" height="2" fill="#000"/>
<rect x="1126" y="132" width="1" height="3" fill="#000"/>
<rect x="1133" y="133" width="1" height="2" fill="#000"/>
<rect x="1141" y="133" width="1" height="2" fill="#000"/>
<rect x="1148" y="133" width="1" height="2" fill="#000"/>
<rect x="1156" y="128" width="1" height="7" fill="#000"/>
<rect x="1163" y="133" width="1" height="2" fill="#000"/>
<rect x="1171" y="133" width="1" height="2" fill="#000"/>
<rect x="1178" y="133" width="1" height="2" fill="#000"/>
<rect x="1186" y="132" width="1" height="3" fill="#000"/>
<rect x="1193" y="133" width="1" height="2" fill="#000"/>
<rect x="1201" y="133" width="1" height="2" fill="#000"/>
<rect x="1208" y="133" width="1" height="2" fill="#000"/>
<rect x="1216" y="128" width="1" height="7" fill="#000"/>
<rect x="1223" y="133" width="1" height="2" fill="#000"/>
<rect x="1231" y="133" width="1" height="2" fill="#000"/>
<rect x="1238" y="133" width="1" height="2" fill="#000"/>
<rect x="1246" y="132" width="1" height="3" fill="#000"/>
<rect x="1253" y="133" width="1" height="2" fill="#000"/>
<rect x="1261" y="133" width="1" height="2" fill="#000"/>
<rect x="1268" y="133" width="1" height="2" fill="#000"/>
<rect x="1276" y="128" width="1" height="7" fill="#000"/>
<rect x="1283" y="133" width="1" height="2" fill="#000"/>
<rect x="1291" y="133" width="1" height="2" fill="#000"/>
<rect x="1298" y="133" width="1" height="2" fill="#000"/>
<rect x="1306" y="132" width="1" height="3" fill="#000"/>
<rect x="1313" y="133" width="1" height="2" fill="#000"/>
<rect x="1321" y="133" width="1" height="2" fill="#000"/>
<rect x="1328" y="133" width="1" height="2" fill="#000"/>
<rect x="1336" y="128" width="1" height="7" fill="#000"/>
<rect x="1343" y="133" width="1" height="2" fill="#000"/>
<rect x="1351" y="133" width="1" height="2" fill="#000"/>
<rect x="1358" y="133" width="1" height="2" fill="#000"/>
<rect x="1366" y="132" width="1" height="3" fill="#000"/>
<rect x="1373" y="133" width="1" height="2" fill="#000"/>
</svg>
<span class="t rl" style="left:15px;top:3px;width:60px;text-align:center;">1/4</span>
<span class="t rl" style="left:75px;top:3px;width:60px;text-align:center;">0</span>
<span class="t rl" style="left:135px;top:3px;width:60px;text-align:center;">1/4</span>
<span class="t rl" style="left:195px;top:3px;width:60px;text-align:center;">1/2</span>
<span class="t rl" style="left:255px;top:3px;width:60px;text-align:center;">3/4</span>
<span class="t rl" style="left:315px;top:3px;width:60px;text-align:center;">1</span>
<span class="t rl" style="left:375px;top:3px;width:60px;text-align:center;">1&nbsp;1/4</span>
<span class="t rl" style="left:435px;top:3px;width:60px;text-align:center;">1&nbsp;1/2</span>
<span class="t rl" style="left:495px;top:3px;width:60px;text-align:center;">1&nbsp;3/4</span>
<span class="t rl" style="left:555px;top:3px;width:60px;text-align:center;">2</span>
<span class="t rl" style="left:615px;top:3px;width:60px;text-align:center;">2&nbsp;1/4</span>
<span class="t rl" style="left:675px;top:3px;width:60px;text-align:center;">2&nbsp;1/2</span>
<span class="t rl" style="left:735px;top:3px;width:60px;text-align:center;">2&nbsp;3/4</span>
<span class="t rl" style="left:795px;top:3px;width:60px;text-align:center;">3</span>
<span class="t rl" style="left:855px;top:3px;width:60px;text-align:center;">3&nbsp;1/4</span>
<span class="t rl" style="left:915px;top:3px;width:60px;text-align:center;">3&nbsp;1/2</span>
<span class="t rl" style="left:975px;top:3px;width:60px;text-align:center;">3&nbsp;3/4</span>
<span class="t rl" style="left:1035px;top:3px;width:60px;text-align:center;">4</span>
<span class="t rl" style="left:1095px;top:3px;width:60px;text-align:center;">4&nbsp;1/4</span>
<span class="t rl" style="left:1155px;top:3px;width:60px;text-align:center;">4&nbsp;1/2</span>
<span class="t rl" style="left:1215px;top:3px;width:60px;text-align:center;">4&nbsp;3/4</span>
<span class="t rl" style="left:1275px;top:3px;width:60px;text-align:center;">5</span>
<span class="t rl" style="left:1344px;top:3px;">cale</span>
</div>
<div style="left:31px;top:117px;width:19px;height:19px;background:#f0f0f0;"></div>
<svg width="16" height="16" style="left:35px;top:121px" viewBox="0 0 16 16"><path d="M5.500 2v8M1.500 6h8" stroke="#111" stroke-width="1" stroke-dasharray="1 1"/><path d="M6.500 7l4.500 4.500M11.500 9v3h-3" stroke="#111" stroke-width="1" fill="none"/></svg>
<div id="vruler" style="left:31px;top:137px;width:20px;height:789px;background:#f0f0f0;border-left:1px solid #d9d9d9;overflow:hidden;">
<svg width="20" height="789" style="left:-1px;top:0" viewBox="31 137 20 789" shape-rendering="crispEdges">
<rect x="50" y="137" width="1" height="789" fill="#9a9a9a"/>
<rect x="48" y="923" width="2" height="1" fill="#000"/>
<rect x="44" y="916" width="6" height="1" fill="#000"/>
<rect x="48" y="908" width="2" height="1" fill="#000"/>
<rect x="48" y="901" width="2" height="1" fill="#000"/>
<rect x="48" y="893" width="2" height="1" fill="#000"/>
<rect x="47" y="886" width="3" height="1" fill="#000"/>
<rect x="48" y="878" width="2" height="1" fill="#000"/>
<rect x="48" y="871" width="2" height="1" fill="#000"/>
<rect x="48" y="863" width="2" height="1" fill="#000"/>
<rect x="44" y="856" width="6" height="1" fill="#000"/>
<rect x="48" y="848" width="2" height="1" fill="#000"/>
<rect x="48" y="841" width="2" height="1" fill="#000"/>
<rect x="48" y="833" width="2" height="1" fill="#000"/>
<rect x="47" y="826" width="3" height="1" fill="#000"/>
<rect x="48" y="818" width="2" height="1" fill="#000"/>
<rect x="48" y="811" width="2" height="1" fill="#000"/>
<rect x="48" y="803" width="2" height="1" fill="#000"/>
<rect x="44" y="796" width="6" height="1" fill="#000"/>
<rect x="48" y="788" width="2" height="1" fill="#000"/>
<rect x="48" y="781" width="2" height="1" fill="#000"/>
<rect x="48" y="773" width="2" height="1" fill="#000"/>
<rect x="47" y="766" width="3" height="1" fill="#000"/>
<rect x="48" y="758" width="2" height="1" fill="#000"/>
<rect x="48" y="751" width="2" height="1" fill="#000"/>
<rect x="48" y="743" width="2" height="1" fill="#000"/>
<rect x="44" y="736" width="6" height="1" fill="#000"/>
<rect x="48" y="728" width="2" height="1" fill="#000"/>
<rect x="48" y="721" width="2" height="1" fill="#000"/>
<rect x="48" y="713" width="2" height="1" fill="#000"/>
<rect x="47" y="706" width="3" height="1" fill="#000"/>
<rect x="48" y="698" width="2" height="1" fill="#000"/>
<rect x="48" y="691" width="2" height="1" fill="#000"/>
<rect x="48" y="683" width="2" height="1" fill="#000"/>
<rect x="44" y="676" width="6" height="1" fill="#000"/>
<rect x="48" y="668" width="2" height="1" fill="#000"/>
<rect x="48" y="661" width="2" height="1" fill="#000"/>
<rect x="48" y="653" width="2" height="1" fill="#000"/>
<rect x="47" y="646" width="3" height="1" fill="#000"/>
<rect x="48" y="638" width="2" height="1" fill="#000"/>
<rect x="48" y="631" width="2" height="1" fill="#000"/>
<rect x="48" y="623" width="2" height="1" fill="#000"/>
<rect x="44" y="616" width="6" height="1" fill="#000"/>
<rect x="48" y="608" width="2" height="1" fill="#000"/>
<rect x="48" y="601" width="2" height="1" fill="#000"/>
<rect x="48" y="593" width="2" height="1" fill="#000"/>
<rect x="47" y="586" width="3" height="1" fill="#000"/>
<rect x="48" y="578" width="2" height="1" fill="#000"/>
<rect x="48" y="571" width="2" height="1" fill="#000"/>
<rect x="48" y="563" width="2" height="1" fill="#000"/>
<rect x="44" y="556" width="6" height="1" fill="#000"/>
<rect x="48" y="548" width="2" height="1" fill="#000"/>
<rect x="48" y="541" width="2" height="1" fill="#000"/>
<rect x="48" y="533" width="2" height="1" fill="#000"/>
<rect x="47" y="526" width="3" height="1" fill="#000"/>
<rect x="48" y="518" width="2" height="1" fill="#000"/>
<rect x="48" y="511" width="2" height="1" fill="#000"/>
<rect x="48" y="503" width="2" height="1" fill="#000"/>
<rect x="44" y="496" width="6" height="1" fill="#000"/>
<rect x="48" y="488" width="2" height="1" fill="#000"/>
<rect x="48" y="481" width="2" height="1" fill="#000"/>
<rect x="48" y="473" width="2" height="1" fill="#000"/>
<rect x="47" y="466" width="3" height="1" fill="#000"/>
<rect x="48" y="458" width="2" height="1" fill="#000"/>
<rect x="48" y="451" width="2" height="1" fill="#000"/>
<rect x="48" y="443" width="2" height="1" fill="#000"/>
<rect x="44" y="436" width="6" height="1" fill="#000"/>
<rect x="48" y="428" width="2" height="1" fill="#000"/>
<rect x="48" y="421" width="2" height="1" fill="#000"/>
<rect x="48" y="413" width="2" height="1" fill="#000"/>
<rect x="47" y="406" width="3" height="1" fill="#000"/>
<rect x="48" y="398" width="2" height="1" fill="#000"/>
<rect x="48" y="391" width="2" height="1" fill="#000"/>
<rect x="48" y="383" width="2" height="1" fill="#000"/>
<rect x="44" y="376" width="6" height="1" fill="#000"/>
<rect x="48" y="368" width="2" height="1" fill="#000"/>
<rect x="48" y="361" width="2" height="1" fill="#000"/>
<rect x="48" y="353" width="2" height="1" fill="#000"/>
<rect x="47" y="346" width="3" height="1" fill="#000"/>
<rect x="48" y="338" width="2" height="1" fill="#000"/>
<rect x="48" y="331" width="2" height="1" fill="#000"/>
<rect x="48" y="323" width="2" height="1" fill="#000"/>
<rect x="44" y="316" width="6" height="1" fill="#000"/>
<rect x="48" y="308" width="2" height="1" fill="#000"/>
<rect x="48" y="301" width="2" height="1" fill="#000"/>
<rect x="48" y="293" width="2" height="1" fill="#000"/>
<rect x="47" y="286" width="3" height="1" fill="#000"/>
<rect x="48" y="278" width="2" height="1" fill="#000"/>
<rect x="48" y="271" width="2" height="1" fill="#000"/>
<rect x="48" y="263" width="2" height="1" fill="#000"/>
<rect x="44" y="256" width="6" height="1" fill="#000"/>
<rect x="48" y="248" width="2" height="1" fill="#000"/>
<rect x="48" y="241" width="2" height="1" fill="#000"/>
<rect x="48" y="233" width="2" height="1" fill="#000"/>
<rect x="47" y="226" width="3" height="1" fill="#000"/>
<rect x="48" y="218" width="2" height="1" fill="#000"/>
<rect x="48" y="211" width="2" height="1" fill="#000"/>
<rect x="48" y="203" width="2" height="1" fill="#000"/>
<rect x="44" y="196" width="6" height="1" fill="#000"/>
<rect x="48" y="188" width="2" height="1" fill="#000"/>
<rect x="48" y="181" width="2" height="1" fill="#000"/>
<rect x="48" y="173" width="2" height="1" fill="#000"/>
<rect x="47" y="166" width="3" height="1" fill="#000"/>
<rect x="48" y="158" width="2" height="1" fill="#000"/>
<rect x="48" y="151" width="2" height="1" fill="#000"/>
<rect x="48" y="143" width="2" height="1" fill="#000"/>
</svg>
<span class="t rl" style="left:-21px;top:716px;width:60px;text-align:center;transform:rotate(-90deg);transform-origin:50% 50%;">1/2</span>
<span class="t rl" style="left:-21px;top:656px;width:60px;text-align:center;transform:rotate(-90deg);transform-origin:50% 50%;">1/4</span>
<span class="t rl" style="left:-21px;top:595.5px;width:60px;text-align:center;transform:rotate(-90deg);transform-origin:50% 50%;">0</span>
<span class="t rl" style="left:-21px;top:536px;width:60px;text-align:center;transform:rotate(-90deg);transform-origin:50% 50%;">1/4</span>
<span class="t rl" style="left:-21px;top:476px;width:60px;text-align:center;transform:rotate(-90deg);transform-origin:50% 50%;">1/2</span>
<span class="t rl" style="left:-21px;top:416px;width:60px;text-align:center;transform:rotate(-90deg);transform-origin:50% 50%;">3/4</span>
<span class="t rl" style="left:-21px;top:355.5px;width:60px;text-align:center;transform:rotate(-90deg);transform-origin:50% 50%;">1</span>
<span class="t rl" style="left:-21px;top:297px;width:60px;text-align:center;transform:rotate(-90deg);transform-origin:50% 50%;">1&nbsp;1/4</span>
<span class="t rl" style="left:-21px;top:237px;width:60px;text-align:center;transform:rotate(-90deg);transform-origin:50% 50%;">1&nbsp;1/2</span>
<span class="t rl" style="left:-21px;top:177px;width:60px;text-align:center;transform:rotate(-90deg);transform-origin:50% 50%;">1&nbsp;3/4</span>
<span class="t rl" style="left:-21px;top:115.5px;width:60px;text-align:center;transform:rotate(-90deg);transform-origin:50% 50%;">2</span>
<span class="t rl" style="left:-21px;top:57px;width:60px;text-align:center;transform:rotate(-90deg);transform-origin:50% 50%;">2&nbsp;1/4</span>
<span class="t rl" style="left:-21px;top:6px;width:60px;text-align:center;transform:rotate(-90deg);transform-origin:50% 50%;">2</span>
</div>
<!-- canvas.html -->
<div id="canvas" style="left:51px;top:137px;width:1326px;height:789px;background:#fff;overflow:hidden;">
  <!-- page shadow -->
  <div style="left:92px;top:126px;width:840px;height:479px;background:#c2c2c2;"></div>
  <svg id="art" width="842" height="483" style="left:84px;top:119px" viewBox="135 256 842 483">
    <defs>
      <clipPath id="pg"><rect x="136" y="257" width="840" height="481"/></clipPath>
      <filter id="gb" filterUnits="userSpaceOnUse" x="76" y="197" width="960" height="601" color-interpolation-filters="sRGB"><feGaussianBlur stdDeviation="11"/></filter>
      <filter id="f20" filterUnits="userSpaceOnUse" x="76" y="197" width="960" height="601"><feGaussianBlur stdDeviation="20"/></filter>
      <filter id="f12" filterUnits="userSpaceOnUse" x="76" y="197" width="960" height="601"><feGaussianBlur stdDeviation="12"/></filter>
      <filter id="f3" filterUnits="userSpaceOnUse" x="76" y="197" width="960" height="601"><feGaussianBlur stdDeviation="3"/></filter>
      <filter id="f7" filterUnits="userSpaceOnUse" x="76" y="197" width="960" height="601"><feGaussianBlur stdDeviation="7"/></filter>
    </defs>
    <rect x="136" y="257" width="840" height="481" fill="#181818"/>
    <g clip-path="url(#pg)">
      <g filter="url(#gb)">
      <rect x="76" y="197" width="960" height="601" fill="#181818"/>
      <rect x="106" y="227" width="31" height="31" fill="#181818"/><rect x="136" y="227" width="31" height="31" fill="#181818"/><rect x="166" y="227" width="31" height="31" fill="#191919"/><rect x="196" y="227" width="31" height="31" fill="#191919"/><rect x="226" y="227" width="31" height="31" fill="#1a1a1a"/><rect x="256" y="227" width="31" height="31" fill="#1b1b1b"/><rect x="286" y="227" width="31" height="31" fill="#1c1c1c"/><rect x="316" y="227" width="31" height="31" fill="#1c1c1c"/><rect x="346" y="227" width="31" height="31" fill="#1c1c1c"/><rect x="376" y="227" width="31" height="31" fill="#1c1c1c"/><rect x="406" y="227" width="31" height="31" fill="#1c1c1c"/><rect x="436" y="227" width="31" height="31" fill="#1c1c1c"/><rect x="466" y="227" width="31" height="31" fill="#1a1b19"/><rect x="496" y="227" width="31" height="31" fill="#191c18"/><rect x="526" y="227" width="31" height="31" fill="#181c17"/><rect x="556" y="227" width="31" height="31" fill="#181b17"/><rect x="586" y="227" width="31" height="31" fill="#191918"/><rect x="616" y="227" width="31" height="31" fill="#1b191a"/><rect x="646" y="227" width="31" height="31" fill="#1c181b"/><rect x="676" y="227" width="31" height="31" fill="#1d181c"/><rect x="706" y="227" width="31" height="31" fill="#1e181c"/><rect x="736" y="227" width="31" height="31" fill="#1e181c"/><rect x="766" y="227" width="31" height="31" fill="#1e181c"/><rect x="796" y="227" width="31" height="31" fill="#1d181c"/><rect x="826" y="227" width="31" height="31" fill="#1c181b"/><rect x="856" y="227" width="31" height="31" fill="#1c181a"/><rect x="886" y="227" width="31" height="31" fill="#1a1819"/><rect x="916" y="227" width="31" height="31" fill="#191819"/><rect x="946" y="227" width="31" height="31" fill="#181818"/><rect x="976" y="227" width="31" height="31" fill="#181818"/><rect x="106" y="257" width="31" height="31" fill="#181818"/><rect x="136" y="257" width="31" height="31" fill="#181818"/><rect x="166" y="257" width="31" height="31" fill="#1a1a1a"/><rect x="196" y="257" width="31" height="31" fill="#1c1c1c"/><rect x="226" y="257" width="31" height="31" fill="#1e1e1e"/><rect x="256" y="257" width="31" height="31" fill="#202020"/><rect x="286" y="257" width="31" height="31" fill="#222222"/><rect x="316" y="257" width="31" height="31" fill="#222222"/><rect x="346" y="257" width="31" height="31" fill="#222222"/><rect x="376" y="257" width="31" height="31" fill="#222222"/><rect x="406" y="257" width="31" height="31" fill="#222222"/><rect x="436" y="257" width="31" height="31" fill="#222222"/><rect x="466" y="257" width="31" height="31" fill="#1e201c"/><rect x="496" y="257" width="31" height="31" fill="#1c2418"/><rect x="526" y="257" width="31" height="31" fill="#182414"/><rect x="556" y="257" width="31" height="31" fill="#182014"/><rect x="586" y="257" width="31" height="31" fill="#1a1c18"/><rect x="616" y="257" width="31" height="31" fill="#201a1e"/><rect x="646" y="257" width="31" height="31" fill="#241820"/><rect x="676" y="257" width="31" height="31" fill="#261822"/><rect x="706" y="257" width="31" height="31" fill="#281824"/><rect x="736" y="257" width="31" height="31" fill="#281824"/><rect x="766" y="257" width="31" height="31" fill="#281824"/><rect x="796" y="257" width="31" height="31" fill="#261822"/><rect x="826" y="257" width="31" height="31" fill="#241820"/><rect x="856" y="257" width="31" height="31" fill="#22181e"/><rect x="886" y="257" width="31" height="31" fill="#1e181c"/><rect x="916" y="257" width="31" height="31" fill="#1c181a"/><rect x="946" y="257" width="31" height="31" fill="#181818"/><rect x="976" y="257" width="31" height="31" fill="#181818"/><rect x="106" y="287" width="31" height="31" fill="#191919"/><rect x="136" y="287" width="31" height="31" fill="#1c1c1c"/><rect x="166" y="287" width="31" height="31" fill="#282828"/><rect x="196" y="287" width="31" height="31" fill="#303030"/><rect x="226" y="287" width="31" height="31" fill="#383838"/><rect x="256" y="287" width="31" height="31" fill="#3e3e3e"/><rect x="286" y="287" width="31" height="31" fill="#444444"/><rect x="316" y="287" width="31" height="31" fill="#484848"/><rect x="346" y="287" width="31" height="31" fill="#4a4a4a"/><rect x="376" y="287" width="31" height="31" fill="#4a4a4a"/><rect x="406" y="287" width="31" height="31" fill="#484848"/><rect x="436" y="287" width="31" height="31" fill="#444444"/><rect x="466" y="287" width="31" height="31" fill="#3c4038"/><rect x="496" y="287" width="31" height="31" fill="#2c4c1c"/><rect x="526" y="287" width="31" height="31" fill="#2a6a10"/><rect x="556" y="287" width="31" height="31" fill="#285c10"/><rect x="586" y="287" width="31" height="31" fill="#2c2c1c"/><rect x="616" y="287" width="31" height="31" fill="#3a2030"/><rect x="646" y="287" width="31" height="31" fill="#461834"/><rect x="676" y="287" width="31" height="31" fill="#4a1436"/><rect x="706" y="287" width="31" height="31" fill="#4a1436"/><rect x="736" y="287" width="31" height="31" fill="#481434"/><rect x="766" y="287" width="31" height="31" fill="#441432"/><rect x="796" y="287" width="31" height="31" fill="#401430"/><rect x="826" y="287" width="31" height="31" fill="#3a142c"/><rect x="856" y="287" width="31" height="31" fill="#321428"/><rect x="886" y="287" width="31" height="31" fill="#2a1622"/><rect x="916" y="287" width="31" height="31" fill="#20181c"/><rect x="946" y="287" width="31" height="31" fill="#181818"/><rect x="976" y="287" width="31" height="31" fill="#181818"/><rect x="106" y="317" width="31" height="31" fill="#1a1a1a"/><rect x="136" y="317" width="31" height="31" fill="#1e1e1e"/><rect x="166" y="317" width="31" height="31" fill="#363636"/><rect x="196" y="317" width="31" height="31" fill="#4e4e4e"/><rect x="226" y="317" width="31" height="31" fill="#606060"/><rect x="256" y="317" width="31" height="31" fill="#707070"/><rect x="286" y="317" width="31" height="31" fill="#7c7c7c"/><rect x="316" y="317" width="31" height="31" fill="#868686"/><rect x="346" y="317" width="31" height="31" fill="#8e8e8e"/><rect x="376" y="317" width="31" height="31" fill="#949494"/><rect x="406" y="317" width="31" height="31" fill="#989898"/><rect x="436" y="317" width="31" height="31" fill="#9c9c9c"/><rect x="466" y="317" width="31" height="31" fill="#98a090"/><rect x="496" y="317" width="31" height="31" fill="#68a048"/><rect x="526" y="317" width="31" height="31" fill="#48b818"/><rect x="556" y="317" width="31" height="31" fill="#3ca010"/><rect x="586" y="317" width="31" height="31" fill="#5a5030"/><rect x="616" y="317" width="31" height="31" fill="#7a2a4c"/><rect x="646" y="317" width="31" height="31" fill="#8a1054"/><rect x="676" y="317" width="31" height="31" fill="#7c0e4e"/><rect x="706" y="317" width="31" height="31" fill="#6e0e48"/><rect x="736" y="317" width="31" height="31" fill="#680e46"/><rect x="766" y="317" width="31" height="31" fill="#620e42"/><rect x="796" y="317" width="31" height="31" fill="#5a1040"/><rect x="826" y="317" width="31" height="31" fill="#50123a"/><rect x="856" y="317" width="31" height="31" fill="#441432"/><rect x="886" y="317" width="31" height="31" fill="#361628"/><rect x="916" y="317" width="31" height="31" fill="#24181e"/><rect x="946" y="317" width="31" height="31" fill="#181818"/><rect x="976" y="317" width="31" height="31" fill="#181818"/><rect x="106" y="347" width="31" height="31" fill="#1b1b1b"/><rect x="136" y="347" width="31" height="31" fill="#202020"/><rect x="166" y="347" width="31" height="31" fill="#3e3e3e"/><rect x="196" y="347" width="31" height="31" fill="#5a5a5a"/><rect x="226" y="347" width="31" height="31" fill="#747474"/><rect x="256" y="347" width="31" height="31" fill="#8c8c8c"/><rect x="286" y="347" width="31" height="31" fill="#a0a0a0"/><rect x="316" y="347" width="31" height="31" fill="#b0b0b0"/><rect x="346" y="347" width="31" height="31" fill="#bebebe"/><rect x="376" y="347" width="31" height="31" fill="#cccccc"/><rect x="406" y="347" width="31" height="31" fill="#d8d8d8"/><rect x="436" y="347" width="31" height="31" fill="#e6e6e6"/><rect x="466" y="347" width="31" height="31" fill="#e8f8d8"/><rect x="496" y="347" width="31" height="31" fill="#88e050"/><rect x="526" y="347" width="31" height="31" fill="#58c818"/><rect x="556" y="347" width="31" height="31" fill="#4ab010"/><rect x="586" y="347" width="31" height="31" fill="#7a5c3c"/><rect x="616" y="347" width="31" height="31" fill="#b83468"/><rect x="646" y="347" width="31" height="31" fill="#d00c78"/><rect x="676" y="347" width="31" height="31" fill="#a80c64"/><rect x="706" y="347" width="31" height="31" fill="#900c58"/><rect x="736" y="347" width="31" height="31" fill="#840c52"/><rect x="766" y="347" width="31" height="31" fill="#7c0e4e"/><rect x="796" y="347" width="31" height="31" fill="#721048"/><rect x="826" y="347" width="31" height="31" fill="#641242"/><rect x="856" y="347" width="31" height="31" fill="#541438"/><rect x="886" y="347" width="31" height="31" fill="#40182c"/><rect x="916" y="347" width="31" height="31" fill="#2a1a22"/><rect x="946" y="347" width="31" height="31" fill="#1a1818"/><rect x="976" y="347" width="31" height="31" fill="#191818"/><rect x="106" y="377" width="31" height="31" fill="#1c1b1b"/><rect x="136" y="377" width="31" height="31" fill="#222020"/><rect x="166" y="377" width="31" height="31" fill="#403a3a"/><rect x="196" y="377" width="31" height="31" fill="#5e5454"/><rect x="226" y="377" width="31" height="31" fill="#7c7070"/><rect x="256" y="377" width="31" height="31" fill="#988c8c"/><rect x="286" y="377" width="31" height="31" fill="#b0a6a6"/><rect x="316" y="377" width="31" height="31" fill="#c4bcbc"/><rect x="346" y="377" width="31" height="31" fill="#d4cece"/><rect x="376" y="377" width="31" height="31" fill="#e2dede"/><rect x="406" y="377" width="31" height="31" fill="#f0eeee"/><rect x="436" y="377" width="31" height="31" fill="#fcfcfa"/><rect x="466" y="377" width="31" height="31" fill="#e0e8c0"/><rect x="496" y="377" width="31" height="31" fill="#70a838"/><rect x="526" y="377" width="31" height="31" fill="#48a010"/><rect x="556" y="377" width="31" height="31" fill="#449810"/><rect x="586" y="377" width="31" height="31" fill="#80583c"/><rect x="616" y="377" width="31" height="31" fill="#b85070"/><rect x="646" y="377" width="31" height="31" fill="#e81088"/><rect x="676" y="377" width="31" height="31" fill="#c80c78"/><rect x="706" y="377" width="31" height="31" fill="#b00c6c"/><rect x="736" y="377" width="31" height="31" fill="#a01064"/><rect x="766" y="377" width="31" height="31" fill="#92145c"/><rect x="796" y="377" width="31" height="31" fill="#841854"/><rect x="826" y="377" width="31" height="31" fill="#741a4a"/><rect x="856" y="377" width="31" height="31" fill="#601c40"/><rect x="886" y="377" width="31" height="31" fill="#481c32"/><rect x="916" y="377" width="31" height="31" fill="#2e1c24"/><rect x="946" y="377" width="31" height="31" fill="#1a1818"/><rect x="976" y="377" width="31" height="31" fill="#191818"/><rect x="106" y="407" width="31" height="31" fill="#1c1919"/><rect x="136" y="407" width="31" height="31" fill="#221c1c"/><rect x="166" y="407" width="31" height="31" fill="#3c2e2c"/><rect x="196" y="407" width="31" height="31" fill="#5a4440"/><rect x="226" y="407" width="31" height="31" fill="#7a5c58"/><rect x="256" y="407" width="31" height="31" fill="#987470"/><rect x="286" y="407" width="31" height="31" fill="#c09c98"/><rect x="316" y="407" width="31" height="31" fill="#d4b0ac"/><rect x="346" y="407" width="31" height="31" fill="#e4c4c0"/><rect x="376" y="407" width="31" height="31" fill="#f0d4d0"/><rect x="406" y="407" width="31" height="31" fill="#f8dcd8"/><rect x="436" y="407" width="31" height="31" fill="#f0c8b8"/><rect x="466" y="407" width="31" height="31" fill="#b89868"/><rect x="496" y="407" width="31" height="31" fill="#607828"/><rect x="526" y="407" width="31" height="31" fill="#3a7a10"/><rect x="556" y="407" width="31" height="31" fill="#2c6810"/><rect x="586" y="407" width="31" height="31" fill="#545028"/><rect x="616" y="407" width="31" height="31" fill="#a05868"/><rect x="646" y="407" width="31" height="31" fill="#e84098"/><rect x="676" y="407" width="31" height="31" fill="#e02088"/><rect x="706" y="407" width="31" height="31" fill="#c42078"/><rect x="736" y="407" width="31" height="31" fill="#b0286c"/><rect x="766" y="407" width="31" height="31" fill="#a03068"/><rect x="796" y="407" width="31" height="31" fill="#903462"/><rect x="826" y="407" width="31" height="31" fill="#7c3458"/><rect x="856" y="407" width="31" height="31" fill="#64304a"/><rect x="886" y="407" width="31" height="31" fill="#4c2a3a"/><rect x="916" y="407" width="31" height="31" fill="#30222a"/><rect x="946" y="407" width="31" height="31" fill="#1a1818"/><rect x="976" y="407" width="31" height="31" fill="#191818"/><rect x="106" y="437" width="31" height="31" fill="#1b1918"/><rect x="136" y="437" width="31" height="31" fill="#201a18"/><rect x="166" y="437" width="31" height="31" fill="#4a2c28"/><rect x="196" y="437" width="31" height="31" fill="#7a4038"/><rect x="226" y="437" width="31" height="31" fill="#a05048"/><rect x="256" y="437" width="31" height="31" fill="#b45a4e"/><rect x="286" y="437" width="31" height="31" fill="#c86858"/><rect x="316" y="437" width="31" height="31" fill="#d87464"/><rect x="346" y="437" width="31" height="31" fill="#e47c6a"/><rect x="376" y="437" width="31" height="31" fill="#ec806c"/><rect x="406" y="437" width="31" height="31" fill="#ec7864"/><rect x="436" y="437" width="31" height="31" fill="#d46850"/><rect x="466" y="437" width="31" height="31" fill="#906038"/><rect x="496" y="437" width="31" height="31" fill="#3a4018"/><rect x="526" y="437" width="31" height="31" fill="#1c3410"/><rect x="556" y="437" width="31" height="31" fill="#182c12"/><rect x="586" y="437" width="31" height="31" fill="#4a4034"/><rect x="616" y="437" width="31" height="31" fill="#8a6068"/><rect x="646" y="437" width="31" height="31" fill="#e080a0"/><rect x="676" y="437" width="31" height="31" fill="#e870a0"/><rect x="706" y="437" width="31" height="31" fill="#d86494"/><rect x="736" y="437" width="31" height="31" fill="#c46088"/><rect x="766" y="437" width="31" height="31" fill="#b0607e"/><rect x="796" y="437" width="31" height="31" fill="#9c5c74"/><rect x="826" y="437" width="31" height="31" fill="#845468"/><rect x="856" y="437" width="31" height="31" fill="#6a4858"/><rect x="886" y="437" width="31" height="31" fill="#503a44"/><rect x="916" y="437" width="31" height="31" fill="#322a2e"/><rect x="946" y="437" width="31" height="31" fill="#1a1818"/><rect x="976" y="437" width="31" height="31" fill="#191818"/><rect x="106" y="467" width="31" height="31" fill="#1a1818"/><rect x="136" y="467" width="31" height="31" fill="#1e1818"/><rect x="166" y="467" width="31" height="31" fill="#48201c"/><rect x="196" y="467" width="31" height="31" fill="#7c2a20"/><rect x="226" y="467" width="31" height="31" fill="#a83224"/><rect x="256" y="467" width="31" height="31" fill="#c03424"/><rect x="286" y="467" width="31" height="31" fill="#d03424"/><rect x="316" y="467" width="31" height="31" fill="#d83624"/><rect x="346" y="467" width="31" height="31" fill="#e03822"/><rect x="376" y="467" width="31" height="31" fill="#e4341e"/><rect x="406" y="467" width="31" height="31" fill="#e02e1c"/><rect x="436" y="467" width="31" height="31" fill="#c42c1e"/><rect x="466" y="467" width="31" height="31" fill="#702a1e"/><rect x="496" y="467" width="31" height="31" fill="#241c16"/><rect x="526" y="467" width="31" height="31" fill="#101410"/><rect x="556" y="467" width="31" height="31" fill="#121612"/><rect x="586" y="467" width="31" height="31" fill="#443c3a"/><rect x="616" y="467" width="31" height="31" fill="#7a6468"/><rect x="646" y="467" width="31" height="31" fill="#e0a0a8"/><rect x="676" y="467" width="31" height="31" fill="#f8b0b8"/><rect x="706" y="467" width="31" height="31" fill="#f0a4b0"/><rect x="736" y="467" width="31" height="31" fill="#d898a0"/><rect x="766" y="467" width="31" height="31" fill="#c08c94"/><rect x="796" y="467" width="31" height="31" fill="#a88088"/><rect x="826" y="467" width="31" height="31" fill="#8c7078"/><rect x="856" y="467" width="31" height="31" fill="#705c62"/><rect x="886" y="467" width="31" height="31" fill="#54484c"/><rect x="916" y="467" width="31" height="31" fill="#343032"/><rect x="946" y="467" width="31" height="31" fill="#1a1818"/><rect x="976" y="467" width="31" height="31" fill="#191818"/><rect x="106" y="497" width="31" height="31" fill="#191717"/><rect x="136" y="497" width="31" height="31" fill="#1c1616"/><rect x="166" y="497" width="31" height="31" fill="#401a18"/><rect x="196" y="497" width="31" height="31" fill="#6c1e1a"/><rect x="226" y="497" width="31" height="31" fill="#90201c"/><rect x="256" y="497" width="31" height="31" fill="#a8221c"/><rect x="286" y="497" width="31" height="31" fill="#b8241e"/><rect x="316" y="497" width="31" height="31" fill="#c6261e"/><rect x="346" y="497" width="31" height="31" fill="#d4281e"/><rect x="376" y="497" width="31" height="31" fill="#dc281c"/><rect x="406" y="497" width="31" height="31" fill="#dc281c"/><rect x="436" y="497" width="31" height="31" fill="#c4241e"/><rect x="466" y="497" width="31" height="31" fill="#6c2220"/><rect x="496" y="497" width="31" height="31" fill="#241a1a"/><rect x="526" y="497" width="31" height="31" fill="#0e1212"/><rect x="556" y="497" width="31" height="31" fill="#121616"/><rect x="586" y="497" width="31" height="31" fill="#4a4040"/><rect x="616" y="497" width="31" height="31" fill="#846c6c"/><rect x="646" y="497" width="31" height="31" fill="#e8a8ac"/><rect x="676" y="497" width="31" height="31" fill="#f8b8bc"/><rect x="706" y="497" width="31" height="31" fill="#eaa8ac"/><rect x="736" y="497" width="31" height="31" fill="#d49a9e"/><rect x="766" y="497" width="31" height="31" fill="#b88a8e"/><rect x="796" y="497" width="31" height="31" fill="#9c7a7e"/><rect x="826" y="497" width="31" height="31" fill="#846a6c"/><rect x="856" y="497" width="31" height="31" fill="#6a5858"/><rect x="886" y="497" width="31" height="31" fill="#504444"/><rect x="916" y="497" width="31" height="31" fill="#343030"/><rect x="946" y="497" width="31" height="31" fill="#1a1818"/><rect x="976" y="497" width="31" height="31" fill="#191818"/><rect x="106" y="527" width="31" height="31" fill="#191718"/><rect x="136" y="527" width="31" height="31" fill="#1c1618"/><rect x="166" y="527" width="31" height="31" fill="#36181a"/><rect x="196" y="527" width="31" height="31" fill="#58181e"/><rect x="226" y="527" width="31" height="31" fill="#781a24"/><rect x="256" y="527" width="31" height="31" fill="#8e1a28"/><rect x="286" y="527" width="31" height="31" fill="#a01a2c"/><rect x="316" y="527" width="31" height="31" fill="#b01a30"/><rect x="346" y="527" width="31" height="31" fill="#c01a34"/><rect x="376" y="527" width="31" height="31" fill="#cc1a38"/><rect x="406" y="527" width="31" height="31" fill="#d41a40"/><rect x="436" y="527" width="31" height="31" fill="#c82048"/><rect x="466" y="527" width="31" height="31" fill="#984058"/><rect x="496" y="527" width="31" height="31" fill="#4a3c48"/><rect x="526" y="527" width="31" height="31" fill="#2a5858"/><rect x="556" y="527" width="31" height="31" fill="#1c4444"/><rect x="586" y="527" width="31" height="31" fill="#3a4a50"/><rect x="616" y="527" width="31" height="31" fill="#806c80"/><rect x="646" y="527" width="31" height="31" fill="#c890b0"/><rect x="676" y="527" width="31" height="31" fill="#d494b4"/><rect x="706" y="527" width="31" height="31" fill="#c488a4"/><rect x="736" y="527" width="31" height="31" fill="#b07c94"/><rect x="766" y="527" width="31" height="31" fill="#9a7084"/><rect x="796" y="527" width="31" height="31" fill="#846474"/><rect x="826" y="527" width="31" height="31" fill="#6e5664"/><rect x="856" y="527" width="31" height="31" fill="#5a4850"/><rect x="886" y="527" width="31" height="31" fill="#443a40"/><rect x="916" y="527" width="31" height="31" fill="#2e2a2c"/><rect x="946" y="527" width="31" height="31" fill="#1a1818"/><rect x="976" y="527" width="31" height="31" fill="#191818"/><rect x="106" y="557" width="31" height="31" fill="#191718"/><rect x="136" y="557" width="31" height="31" fill="#1c1618"/><rect x="166" y="557" width="31" height="31" fill="#30161c"/><rect x="196" y="557" width="31" height="31" fill="#4a1622"/><rect x="226" y="557" width="31" height="31" fill="#64162a"/><rect x="256" y="557" width="31" height="31" fill="#7a1630"/><rect x="286" y="557" width="31" height="31" fill="#8a1638"/><rect x="316" y="557" width="31" height="31" fill="#98163e"/><rect x="346" y="557" width="31" height="31" fill="#a41644"/><rect x="376" y="557" width="31" height="31" fill="#b0184c"/><rect x="406" y="557" width="31" height="31" fill="#bc1856"/><rect x="436" y="557" width="31" height="31" fill="#c81c64"/><rect x="466" y="557" width="31" height="31" fill="#b83a78"/><rect x="496" y="557" width="31" height="31" fill="#70688a"/><rect x="526" y="557" width="31" height="31" fill="#488c90"/><rect x="556" y="557" width="31" height="31" fill="#3a8888"/><rect x="586" y="557" width="31" height="31" fill="#4a6888"/><rect x="616" y="557" width="31" height="31" fill="#64649c"/><rect x="646" y="557" width="31" height="31" fill="#6e4aa8"/><rect x="676" y="557" width="31" height="31" fill="#6a3e9c"/><rect x="706" y="557" width="31" height="31" fill="#664090"/><rect x="736" y="557" width="31" height="31" fill="#604084"/><rect x="766" y="557" width="31" height="31" fill="#5a3e78"/><rect x="796" y="557" width="31" height="31" fill="#523a6a"/><rect x="826" y="557" width="31" height="31" fill="#48345a"/><rect x="856" y="557" width="31" height="31" fill="#3e2e48"/><rect x="886" y="557" width="31" height="31" fill="#322838"/><rect x="916" y="557" width="31" height="31" fill="#26222a"/><rect x="946" y="557" width="31" height="31" fill="#1a1818"/><rect x="976" y="557" width="31" height="31" fill="#191818"/><rect x="106" y="587" width="31" height="31" fill="#191718"/><rect x="136" y="587" width="31" height="31" fill="#1a1618"/><rect x="166" y="587" width="31" height="31" fill="#2a161c"/><rect x="196" y="587" width="31" height="31" fill="#3e1622"/><rect x="226" y="587" width="31" height="31" fill="#52162a"/><rect x="256" y="587" width="31" height="31" fill="#641630"/><rect x="286" y="587" width="31" height="31" fill="#721636"/><rect x="316" y="587" width="31" height="31" fill="#7c163c"/><rect x="346" y="587" width="31" height="31" fill="#861642"/><rect x="376" y="587" width="31" height="31" fill="#8e1648"/><rect x="406" y="587" width="31" height="31" fill="#98184e"/><rect x="436" y="587" width="31" height="31" fill="#a81a5c"/><rect x="466" y="587" width="31" height="31" fill="#b82a78"/><rect x="496" y="587" width="31" height="31" fill="#7a6c98"/><rect x="526" y="587" width="31" height="31" fill="#58a0a8"/><rect x="556" y="587" width="31" height="31" fill="#4aa4a8"/><rect x="586" y="587" width="31" height="31" fill="#46709c"/><rect x="616" y="587" width="31" height="31" fill="#3e4aa0"/><rect x="646" y="587" width="31" height="31" fill="#34248c"/><rect x="676" y="587" width="31" height="31" fill="#301c84"/><rect x="706" y="587" width="31" height="31" fill="#2e1a7c"/><rect x="736" y="587" width="31" height="31" fill="#2e1c74"/><rect x="766" y="587" width="31" height="31" fill="#2e1e6a"/><rect x="796" y="587" width="31" height="31" fill="#2e2060"/><rect x="826" y="587" width="31" height="31" fill="#2c2052"/><rect x="856" y="587" width="31" height="31" fill="#2a2044"/><rect x="886" y="587" width="31" height="31" fill="#262036"/><rect x="916" y="587" width="31" height="31" fill="#201c28"/><rect x="946" y="587" width="31" height="31" fill="#18181a"/><rect x="976" y="587" width="31" height="31" fill="#181819"/><rect x="106" y="617" width="31" height="31" fill="#191718"/><rect x="136" y="617" width="31" height="31" fill="#1a1618"/><rect x="166" y="617" width="31" height="31" fill="#24161a"/><rect x="196" y="617" width="31" height="31" fill="#341620"/><rect x="226" y="617" width="31" height="31" fill="#441626"/><rect x="256" y="617" width="31" height="31" fill="#52162c"/><rect x="286" y="617" width="31" height="31" fill="#5c1630"/><rect x="316" y="617" width="31" height="31" fill="#641634"/><rect x="346" y="617" width="31" height="31" fill="#6a1638"/><rect x="376" y="617" width="31" height="31" fill="#70163c"/><rect x="406" y="617" width="31" height="31" fill="#761640"/><rect x="436" y="617" width="31" height="31" fill="#7c1848"/><rect x="466" y="617" width="31" height="31" fill="#801e58"/><rect x="496" y="617" width="31" height="31" fill="#68547c"/><rect x="526" y="617" width="31" height="31" fill="#509098"/><rect x="556" y="617" width="31" height="31" fill="#48a0a4"/><rect x="586" y="617" width="31" height="31" fill="#3a6488"/><rect x="616" y="617" width="31" height="31" fill="#2c3a80"/><rect x="646" y="617" width="31" height="31" fill="#241c70"/><rect x="676" y="617" width="31" height="31" fill="#22186a"/><rect x="706" y="617" width="31" height="31" fill="#201664"/><rect x="736" y="617" width="31" height="31" fill="#20165e"/><rect x="766" y="617" width="31" height="31" fill="#201856"/><rect x="796" y="617" width="31" height="31" fill="#20184e"/><rect x="826" y="617" width="31" height="31" fill="#201a44"/><rect x="856" y="617" width="31" height="31" fill="#1e1a3a"/><rect x="886" y="617" width="31" height="31" fill="#1e1a30"/><rect x="916" y="617" width="31" height="31" fill="#1c1a24"/><rect x="946" y="617" width="31" height="31" fill="#18181a"/><rect x="976" y="617" width="31" height="31" fill="#181819"/><rect x="106" y="647" width="31" height="31" fill="#181718"/><rect x="136" y="647" width="31" height="31" fill="#181618"/><rect x="166" y="647" width="31" height="31" fill="#20161a"/><rect x="196" y="647" width="31" height="31" fill="#2a161c"/><rect x="226" y="647" width="31" height="31" fill="#361620"/><rect x="256" y="647" width="31" height="31" fill="#401624"/><rect x="286" y="647" width="31" height="31" fill="#461628"/><rect x="316" y="647" width="31" height="31" fill="#4c162a"/><rect x="346" y="647" width="31" height="31" fill="#50162c"/><rect x="376" y="647" width="31" height="31" fill="#52162e"/><rect x="406" y="647" width="31" height="31" fill="#541630"/><rect x="436" y="647" width="31" height="31" fill="#561834"/><rect x="466" y="647" width="31" height="31" fill="#541a3c"/><rect x="496" y="647" width="31" height="31" fill="#463858"/><rect x="526" y="647" width="31" height="31" fill="#3a6468"/><rect x="556" y="647" width="31" height="31" fill="#387c80"/><rect x="586" y="647" width="31" height="31" fill="#2a4a64"/><rect x="616" y="647" width="31" height="31" fill="#20285c"/><rect x="646" y="647" width="31" height="31" fill="#1c1852"/><rect x="676" y="647" width="31" height="31" fill="#1a144c"/><rect x="706" y="647" width="31" height="31" fill="#1a1448"/><rect x="736" y="647" width="31" height="31" fill="#1a1444"/><rect x="766" y="647" width="31" height="31" fill="#1a1640"/><rect x="796" y="647" width="31" height="31" fill="#1a163a"/><rect x="826" y="647" width="31" height="31" fill="#1a1834"/><rect x="856" y="647" width="31" height="31" fill="#1a182e"/><rect x="886" y="647" width="31" height="31" fill="#1a1828"/><rect x="916" y="647" width="31" height="31" fill="#1a1820"/><rect x="946" y="647" width="31" height="31" fill="#18181a"/><rect x="976" y="647" width="31" height="31" fill="#181819"/><rect x="106" y="677" width="31" height="31" fill="#181718"/><rect x="136" y="677" width="31" height="31" fill="#181618"/><rect x="166" y="677" width="31" height="31" fill="#1c1618"/><rect x="196" y="677" width="31" height="31" fill="#20161a"/><rect x="226" y="677" width="31" height="31" fill="#26161c"/><rect x="256" y="677" width="31" height="31" fill="#2c161e"/><rect x="286" y="677" width="31" height="31" fill="#301620"/><rect x="316" y="677" width="31" height="31" fill="#321620"/><rect x="346" y="677" width="31" height="31" fill="#341622"/><rect x="376" y="677" width="31" height="31" fill="#341622"/><rect x="406" y="677" width="31" height="31" fill="#341624"/><rect x="436" y="677" width="31" height="31" fill="#341826"/><rect x="466" y="677" width="31" height="31" fill="#321a2a"/><rect x="496" y="677" width="31" height="31" fill="#2c2230"/><rect x="526" y="677" width="31" height="31" fill="#243a3c"/><rect x="556" y="677" width="31" height="31" fill="#204444"/><rect x="586" y="677" width="31" height="31" fill="#1c3038"/><rect x="616" y="677" width="31" height="31" fill="#181c34"/><rect x="646" y="677" width="31" height="31" fill="#161630"/><rect x="676" y="677" width="31" height="31" fill="#16142e"/><rect x="706" y="677" width="31" height="31" fill="#16142c"/><rect x="736" y="677" width="31" height="31" fill="#16142a"/><rect x="766" y="677" width="31" height="31" fill="#161428"/><rect x="796" y="677" width="31" height="31" fill="#161626"/><rect x="826" y="677" width="31" height="31" fill="#161624"/><rect x="856" y="677" width="31" height="31" fill="#161620"/><rect x="886" y="677" width="31" height="31" fill="#18181e"/><rect x="916" y="677" width="31" height="31" fill="#18181c"/><rect x="946" y="677" width="31" height="31" fill="#181818"/><rect x="976" y="677" width="31" height="31" fill="#181818"/><rect x="106" y="707" width="31" height="31" fill="#171717"/><rect x="136" y="707" width="31" height="31" fill="#161616"/><rect x="166" y="707" width="31" height="31" fill="#181618"/><rect x="196" y="707" width="31" height="31" fill="#181618"/><rect x="226" y="707" width="31" height="31" fill="#181618"/><rect x="256" y="707" width="31" height="31" fill="#181618"/><rect x="286" y="707" width="31" height="31" fill="#181618"/><rect x="316" y="707" width="31" height="31" fill="#181618"/><rect x="346" y="707" width="31" height="31" fill="#181618"/><rect x="376" y="707" width="31" height="31" fill="#181618"/><rect x="406" y="707" width="31" height="31" fill="#181618"/><rect x="436" y="707" width="31" height="31" fill="#1a1618"/><rect x="466" y="707" width="31" height="31" fill="#1a181a"/><rect x="496" y="707" width="31" height="31" fill="#1a1a1c"/><rect x="526" y="707" width="31" height="31" fill="#1a2222"/><rect x="556" y="707" width="31" height="31" fill="#162020"/><rect x="586" y="707" width="31" height="31" fill="#161a1c"/><rect x="616" y="707" width="31" height="31" fill="#14161a"/><rect x="646" y="707" width="31" height="31" fill="#141418"/><rect x="676" y="707" width="31" height="31" fill="#141418"/><rect x="706" y="707" width="31" height="31" fill="#141418"/><rect x="736" y="707" width="31" height="31" fill="#141418"/><rect x="766" y="707" width="31" height="31" fill="#141418"/><rect x="796" y="707" width="31" height="31" fill="#161618"/><rect x="826" y="707" width="31" height="31" fill="#161618"/><rect x="856" y="707" width="31" height="31" fill="#161618"/><rect x="886" y="707" width="31" height="31" fill="#161618"/><rect x="916" y="707" width="31" height="31" fill="#181818"/><rect x="946" y="707" width="31" height="31" fill="#181818"/><rect x="976" y="707" width="31" height="31" fill="#181818"/><rect x="106" y="737" width="31" height="31" fill="#171717"/><rect x="136" y="737" width="31" height="31" fill="#171717"/><rect x="166" y="737" width="31" height="31" fill="#181718"/><rect x="196" y="737" width="31" height="31" fill="#181718"/><rect x="226" y="737" width="31" height="31" fill="#181718"/><rect x="256" y="737" width="31" height="31" fill="#181718"/><rect x="286" y="737" width="31" height="31" fill="#181718"/><rect x="316" y="737" width="31" height="31" fill="#181718"/><rect x="346" y="737" width="31" height="31" fill="#181718"/><rect x="376" y="737" width="31" height="31" fill="#181718"/><rect x="406" y="737" width="31" height="31" fill="#181718"/><rect x="436" y="737" width="31" height="31" fill="#191718"/><rect x="466" y="737" width="31" height="31" fill="#191819"/><rect x="496" y="737" width="31" height="31" fill="#191919"/><rect x="526" y="737" width="31" height="31" fill="#191c1c"/><rect x="556" y="737" width="31" height="31" fill="#171b1b"/><rect x="586" y="737" width="31" height="31" fill="#171919"/><rect x="616" y="737" width="31" height="31" fill="#171719"/><rect x="646" y="737" width="31" height="31" fill="#171718"/><rect x="676" y="737" width="31" height="31" fill="#171718"/><rect x="706" y="737" width="31" height="31" fill="#171718"/><rect x="736" y="737" width="31" height="31" fill="#171718"/><rect x="766" y="737" width="31" height="31" fill="#171718"/><rect x="796" y="737" width="31" height="31" fill="#171718"/><rect x="826" y="737" width="31" height="31" fill="#171718"/><rect x="856" y="737" width="31" height="31" fill="#171718"/><rect x="886" y="737" width="31" height="31" fill="#171718"/><rect x="916" y="737" width="31" height="31" fill="#181818"/><rect x="946" y="737" width="31" height="31" fill="#181818"/><rect x="976" y="737" width="31" height="31" fill="#181818"/>
      </g>
      <g id="artdetail">
        <path d="M448 401 Q474 388 495 362" stroke="#ffffff" stroke-width="7" fill="none" stroke-linecap="round" filter="url(#f7)" opacity="0.900"/>
        <path d="M470 385 Q486 374 498 358" stroke="#f4ffe6" stroke-width="3" fill="none" stroke-linecap="round" filter="url(#f3)"/>
        <path d="M618 345 Q642 385 690 425" stroke="#ee0c8c" stroke-width="14" fill="none" stroke-linecap="round" filter="url(#f20)" opacity="0.800"/>
      </g>
    </g>
    <rect x="137" y="258" width="838" height="479" fill="none" stroke="#07077e" stroke-width="2"/>
  </svg>
  <!-- selection: ellipse + handles -->
  <svg width="220" height="210" style="left:620px;top:183px" viewBox="671 320 220 210">
    <ellipse cx="773" cy="419" rx="84.5" ry="81" fill="none" stroke="#2414c4" stroke-width="1"/>
    <g shape-rendering="crispEdges">
      <rect x="677" y="327" width="7" height="7" fill="#a6ebcb"/>
      <rect x="768" y="327" width="7" height="7" fill="#a6ebcb"/>
      <rect x="860" y="327" width="7" height="7" fill="#b2ead0"/>
      <rect x="677" y="415" width="7" height="7" fill="#2fc673"/>
      <rect x="860" y="415" width="7" height="7" fill="#a3d6bd"/>
      <rect x="677" y="503" width="7" height="7" fill="#0d4a3e"/>
      <rect x="768" y="503" width="7" height="7" fill="#4d8077"/>
      <rect x="860" y="503" width="7" height="7" fill="#91b3a9"/>
      <rect x="770.500" y="336.500" width="3" height="3" fill="#111" stroke="#e8f8f0" stroke-width="1"/>
    </g>
    <path d="M769.500 416.500l6 6M775.500 416.500l-6 6" stroke="#8fd8b4" stroke-width="1.500"/>
  </svg>
</div>
<!-- vertical scrollbar -->
<div id="vscroll" style="left:1377px;top:137px;width:18px;height:789px;background:linear-gradient(90deg,#f0f0f0 0,#f0f0f0 15px,#f8f8f8 15px);">
  <svg width="17" height="789" style="left:0;top:0" viewBox="0 0 17 789">
    <defs><linearGradient id="gVT" x1="0" y1="0" x2="1" y2="0"><stop offset="0" stop-color="#f6f6f6"/><stop offset="0.450" stop-color="#ebebeb"/><stop offset="0.550" stop-color="#dcdcde"/><stop offset="1" stop-color="#c6c6ca"/></linearGradient></defs>
    <path d="M4 12l4-4 4 4z" fill="#404040"/>
    <path d="M4 779l4 4 4-4z" fill="#404040"/>
    <rect x="0.500" y="153.500" width="14" height="530" rx="2" fill="url(#gVT)" stroke="#8a8a8a"/>
    <path d="M4 415.500h7M4 417.500h7M4 419.500h7" stroke="#5a5a5a" stroke-width="1"/>
  </svg>
</div>

<!-- pagenav.html -->
<div id="pagenav" style="left:51px;top:926px;width:1343px;height:18px;background:#f0f0f0;"></div>
<div style="left:51px;top:926px;width:672px;height:1px;background:#9a9a9a;"></div>
<div style="left:31px;top:926px;width:20px;height:18px;background:#f0f0f0;"></div>
<span class="t rl" style="left:29px;top:928px;width:24px;text-align:center;transform:rotate(-90deg);transform-origin:50% 50%;">cale</span>
<svg width="4" height="18" style="left:46px;top:926px" viewBox="0 0 4 18" shape-rendering="crispEdges"><rect x="1" y="4" width="2" height="1" fill="#000"/><rect x="1" y="11" width="2" height="1" fill="#000"/></svg>
<svg width="1343" height="18" style="left:51px;top:926px" viewBox="51 926 1343 18">
  <defs>
    <linearGradient id="gTab" x1="0" y1="0" x2="0" y2="1"><stop offset="0" stop-color="#e6f3fc"/><stop offset="0.500" stop-color="#c2e2f6"/><stop offset="1" stop-color="#8cc4ea"/></linearGradient>
    <linearGradient id="gThumb" x1="0" y1="0" x2="0" y2="1"><stop offset="0" stop-color="#ececec"/><stop offset="0.450" stop-color="#dadada"/><stop offset="0.550" stop-color="#c8c8c8"/><stop offset="1" stop-color="#d2d2d2"/></linearGradient>
  </defs>
  <!-- add page icons -->
  <g fill="#fff" stroke="#111" stroke-width="1.100"><path d="M54.500 928.500h5l3 3v9h-8z"/><path d="M204.500 928.500h5l3 3v9h-8z"/></g>
  <path d="M56 936.500h5M58.500 934v5M206 936.500h5M208.500 934v5" stroke="#111" stroke-width="1.200"/>
  <!-- nav arrows -->
  <g fill="#8a8a8a"><path d="M79 930v9l-5-4.500z"/><rect x="72" y="930" width="1.500" height="9"/><path d="M96.500 930v9l-5-4.500z"/><path d="M172.500 930v9l5-4.500z"/><path d="M187 930v9l5-4.500z"/><rect x="192.500" y="930" width="1.500" height="9"/></g>
  <!-- tab -->
  <path d="M217.500 927v14.500h80.500v-7l-7.500-7.500z" fill="url(#gTab)" stroke="#8ab4d4" stroke-width="1"/>
  <!-- hscroll -->
  <g fill="#b4b4b4"><rect x="717" y="930" width="2" height="2"/><rect x="717" y="934" width="2" height="2"/><rect x="717" y="938" width="2" height="2"/></g>
  <rect x="723" y="926" width="671" height="18" fill="#ececec"/>
  <path d="M722.500 927v17" stroke="#a6a6a6" stroke-width="1"/>
  <path d="M733.500 931v7l-4-3.500z" fill="#333"/>
  <path d="M1365 931v7l4-3.500z" fill="#333"/>
  <rect x="891.500" y="928.500" width="417" height="13" rx="2" fill="url(#gThumb)" stroke="#8e8e8e"/>
  <path d="M1097.500 932v6M1099.500 932v6M1101.500 932v6" stroke="#555" stroke-width="1"/>
  <!-- zoom icon -->
  <rect x="1377" y="935" width="16" height="8" fill="#e0e0e0"/>
  <circle cx="1383" cy="933" r="4.800" fill="#f8f8fc" stroke="#3a3a50" stroke-width="1.200"/><path d="M1386.500 936.500l3.500 3.500" stroke="#2a2a3a" stroke-width="2"/><circle cx="1383" cy="933" r="2.300" fill="none" stroke="#4a4a6a" stroke-width="1.400" stroke-dasharray="1.800 1.800"/>
</svg>
<span class="t" style="left:120px;top:929px;font-size:12px;word-spacing:1px;">1 z 1</span>
<span class="t" style="left:233px;top:928px;font-size:12.5px;">Strona 1</span>

<!-- docpalette.html -->
<div id="docpal" style="left:31px;top:944px;width:1363px;height:22px;background:#fff;border-bottom:1px solid #c9c9c9;"></div>
<div style="left:31px;top:944px;width:42px;height:21px;background:linear-gradient(#f6f6f6,#ececec);"></div>
<svg width="400" height="22" style="left:31px;top:944px" viewBox="31 944 400 22">
<g fill="#b0b0b0"><rect x="35" y="948" width="2" height="2"/><rect x="35" y="953" width="2" height="2"/><rect x="35" y="958" width="2" height="2"/></g>
<defs><radialGradient id="gCirc2" cx="0.4" cy="0.350" r="0.700"><stop offset="0" stop-color="#fff"/><stop offset="1" stop-color="#d4d4d4"/></radialGradient></defs>
<circle cx="47" cy="955" r="6.300" fill="url(#gCirc2)" stroke="#9a9a9a"/><path d="M45.500 952l4.500 3-4.500 3z" fill="#000"/>
<path d="M60 961l6-6" stroke="#2c2c3a" stroke-width="2.200"/><path d="M64.500 952.500l4 4" stroke="#1a1a24" stroke-width="2.600"/><circle cx="68.300" cy="952.300" r="2" fill="#1a1a24"/>
<rect x="74.500" y="946.500" width="15" height="16" fill="#fff" stroke="#111" stroke-width="1.200"/><path d="M75 947l14 15M89 947l-14 15" stroke="#111" stroke-width="1"/>
<rect x="91" y="946" width="17" height="17" fill="#1a1a1a"/>
<rect x="108" y="946" width="17" height="17" fill="#ffffff"/>
<rect x="125" y="946" width="17" height="17" fill="#58b818"/>
<rect x="142" y="946" width="17" height="17" fill="#50b414"/>
<rect x="159" y="946" width="17" height="17" fill="#147a14"/>
<rect x="176" y="946" width="17" height="17" fill="#e0108a"/>
<rect x="193" y="946" width="17" height="17" fill="#f8e020"/>
<rect x="210" y="946" width="17" height="17" fill="#0aa0d8"/>
<rect x="227" y="946" width="17" height="17" fill="#ffc0c8"/>
<rect x="244" y="946" width="17" height="17" fill="#4aa0a8"/>
<rect x="261" y="946" width="17" height="17" fill="#3a2a9a"/>
<rect x="278" y="946" width="17" height="17" fill="#c01a70"/>
<rect x="295" y="946" width="17" height="17" fill="#e02a1e"/>
<rect x="312" y="946" width="17" height="17" fill="#504840"/>
<rect x="329" y="946" width="17" height="17" fill="#3a2a9a"/>
<rect x="346" y="946" width="17" height="17" fill="#0aa0d8"/>
<rect x="363" y="946" width="17" height="17" fill="#e02a1e"/>
</svg>
<!-- docker.html -->
<div id="docker" style="left:1395px;top:116px;width:265px;height:850px;background:#f0f0f0;border-left:1px solid #cecece;"></div>
<div style="left:1396px;top:117px;width:264px;height:21px;background:linear-gradient(#f3f9fe 0%,#d4eafa 45%,#a9d5f3 100%);"></div>
<span class="t" style="left:1403px;top:122px;font-size:12px;color:#0c1a30;">Menedżer obiektów</span>
<div id="tree" style="left:1399px;top:168px;width:258px;height:770px;background:#fff;border:1px solid #6d6d6d;border-right-color:#8a8a8a;border-bottom-color:#9a9a9a;box-shadow:inset 1px 1px 0 #a0a0a0;overflow:hidden;"></div>
<div style="left:1401px;top:170px;width:255px;height:17px;background:linear-gradient(#dfe9f5,#d2e1f2);border-bottom:1px solid #b9c9dc;"></div>
<div style="left:1401px;top:259px;width:255px;height:18px;background:linear-gradient(#dfe9f5,#d2e1f2);border-bottom:1px solid #b9c9dc;border-top:1px solid #c9d5e4;"></div>
<div style="left:1401px;top:241px;width:255px;height:1px;background:#dcdcdc;"></div>
<div style="left:1401px;top:295px;width:255px;height:1px;background:#dcdcdc;"></div>
<div style="left:1401px;top:313px;width:255px;height:1px;background:#dcdcdc;"></div>
<div style="left:1479px;top:205px;width:37px;height:17px;background:#3399ff;"></div>
<svg width="266" height="850" style="left:1394px;top:116px" viewBox="1394 116 266 850">
<defs>
<linearGradient id="gBtn" x1="0" y1="0" x2="0" y2="1"><stop offset="0" stop-color="#fdfdfd"/><stop offset="0.500" stop-color="#f0f0f0"/><stop offset="1" stop-color="#d6d6d6"/></linearGradient>
<linearGradient id="gBtnSel" x1="0" y1="0" x2="0" y2="1"><stop offset="0" stop-color="#d8ecfb"/><stop offset="0.500" stop-color="#a6d1f2"/><stop offset="1" stop-color="#6fb2e6"/></linearGradient>
<linearGradient id="gClose" x1="0" y1="0" x2="0" y2="1"><stop offset="0" stop-color="#f0b4aa"/><stop offset="0.480" stop-color="#e08878"/><stop offset="0.520" stop-color="#c8503e"/><stop offset="1" stop-color="#d06a58"/></linearGradient>
<linearGradient id="gMin" x1="0" y1="0" x2="0" y2="1"><stop offset="0" stop-color="#d0e0f0"/><stop offset="0.480" stop-color="#c0d4ea"/><stop offset="0.520" stop-color="#a4c0e0"/><stop offset="1" stop-color="#b4cce6"/></linearGradient>
<g id="eye"><path d="M0 4.200c2-2.600 4-3.700 6-3.700s4 1.100 6 3.700c-2 2.600-4 3.700-6 3.700s-4-1.100-6-3.700z" fill="#f4f4f8" stroke="#8a8a9a" stroke-width="0.900"/><ellipse cx="6.300" cy="4" rx="3.300" ry="2.700" fill="#3a3a50"/><ellipse cx="5.300" cy="3.300" rx="1.200" ry="0.900" fill="#9a9ab0"/></g>
<g id="eyeoff"><ellipse cx="6" cy="4.500" rx="6" ry="3.500" fill="#c8c8cc" stroke="#8a8a92" stroke-width="0.900"/><ellipse cx="6" cy="3.800" rx="4" ry="1.800" fill="#e6e6ea"/></g>
<g id="noprint"><rect x="0.500" y="6.500" width="11" height="5.500" fill="#e6e6f0" stroke="#9a9aac" stroke-width="0.900"/><rect x="2.500" y="3.500" width="7" height="3" fill="#fff" stroke="#9a9aac" stroke-width="0.800"/><circle cx="6" cy="5.500" r="4.700" fill="none" stroke="#c0141c" stroke-width="1.700"/><path d="M2.800 8.700l6.400-6.400" stroke="#c0141c" stroke-width="1.700"/></g>
<g id="printer"><rect x="3.500" y="0.500" width="6" height="5" fill="#fff" stroke="#9a9aa8" stroke-width="0.900"/><rect x="0.500" y="5.500" width="12" height="5.500" fill="#e4e4ec" stroke="#6a6a7a" stroke-width="0.900"/><rect x="1" y="6" width="11" height="1.800" fill="#4a4a5a"/></g>
<g id="pencil"><path d="M0 12l1-3.500 7-7.500 3 2.800-7.200 7.200z" fill="#50505e"/><path d="M0 12l1-3.500 2.800 2.500z" fill="#d8d8e0"/><path d="M0 12l.4-1.400 1.100 1z" fill="#222"/></g>
<g id="nopencil"><path d="M0 12l1-3.500 7-7.500 3 2.800-7.200 7.200z" fill="#7a7a88"/><circle cx="7" cy="5.500" r="4.700" fill="none" stroke="#c0141c" stroke-width="1.700"/><path d="M3.800 8.700l6.400-6.400" stroke="#c0141c" stroke-width="1.700"/></g>
<g id="page"><path d="M3 0.500h8.500v12.500h-11v-10z" fill="#cfe6e2" stroke="#8aa0a0" stroke-width="0.800"/><path d="M3 0.500v2.500h-2.500" fill="#fff" stroke="#8aa0a0" stroke-width="0.700"/><path d="M11.500 1v12h-10.500" fill="none" stroke="#1e2440" stroke-width="1.300"/></g>
<g id="minus"><rect x="0.500" y="0.500" width="8" height="8" fill="#fff" stroke="#262c48" stroke-width="1"/><path d="M9.500 1.500v8h-8" fill="none" stroke="#8a8fa8" stroke-width="1"/><path d="M2 4.500h5" stroke="#262c48" stroke-width="1"/></g>
</defs>
<path d="M1604.500 124l3.500 3.500-3.500 3.500M1609 124l3.500 3.500-3.500 3.500" fill="none" stroke="#2a3a50" stroke-width="1.300"/>
<rect x="1620.500" y="119.500" width="16" height="16" rx="1.500" fill="url(#gMin)" stroke="#5a7aa2"/>
<rect x="1623.500" y="128.500" width="10" height="3.500" rx="0.500" fill="#fff" stroke="#5a6f90" stroke-width="0.900"/>
<rect x="1640.500" y="119.500" width="16" height="16" rx="1.500" fill="url(#gClose)" stroke="#5e1c16"/>
<path d="M1644.500 123.500l8 8M1652.500 123.500l-8 8" stroke="#7a2a20" stroke-width="4"/><path d="M1644.500 123.500l8 8M1652.500 123.500l-8 8" stroke="#fff" stroke-width="2.400"/>
<rect x="1400.500" y="142.500" width="21" height="21" rx="3" fill="url(#gBtn)" stroke="#8c8c8c"/>
<rect x="1424.500" y="142.500" width="21" height="21" rx="3" fill="url(#gBtnSel)" stroke="#3b78b0"/>
<rect x="1448.500" y="142.500" width="21" height="21" rx="3" fill="url(#gBtn)" stroke="#8c8c8c"/>
<rect x="1642.500" y="142.500" width="15" height="17" rx="2.500" fill="url(#gBtn)" stroke="#8c8c8c"/>
<path d="M1648 146.500l5 4.500-5 4.500z" fill="#000"/>
<g fill="#dfe3f0" stroke="#50507a" stroke-width="0.800"><path d="M1408 149l3-3h8l-3 3zM1408 154l3-3h8l-3 3zM1408 159l3-3h8l-3 3z"/></g>
<g fill="none" stroke="#3f9a2c" stroke-width="1.400"><path d="M1403 146.500l1.300 1.500 2.400-3M1403 151.500l1.300 1.500 2.400-3M1403 156.500l1.300 1.500 2.400-3"/></g>
<g fill="#eef2fa" stroke="#3a4a6a" stroke-width="0.800"><path d="M1428 147h10l-4 4h-3zM1429 151l3 4h7l3-2.500-7-.5zM1431 156l2 3.500h7l2.500-2-7-1z"/></g>
<path d="M1434.500 152.500l5.500-6 3.200 3-5.700 5.700z" fill="#2c2c3a"/><path d="M1434.500 152.500l-.8 3.200 3.600-.5z" fill="#fff" stroke="#2c2c3a" stroke-width="0.500"/>
<g fill="#dfe3f0" stroke="#50507a" stroke-width="0.800"><path d="M1455 151l4-4h8l-4 4zM1455 155.500l4-4h8l-4 4zM1455 160l4-4h8l-4 4z"/></g>
<path d="M1458 147.500c3-2.500 7-2.500 9 0-2 2-6 2-9 0z" fill="#50506a"/>
<g fill="#5a6a9a" font-size="5.500" font-family="Liberation Sans"><text x="1451" y="150">1</text><text x="1451" y="155.500">2</text><text x="1451" y="161">3</text></g>
<path d="M1467.500 156.500v4.500h-4.500z" fill="#000"/>
<use href="#minus" x="1407" y="173.500"/><use href="#page" x="1424" y="170.500"/>
<use href="#minus" x="1426" y="191"/>
<use href="#minus" x="1407" y="263.500"/><use href="#page" x="1424" y="260.500"/>
<use href="#eye" x="1443" y="191"/>
<use href="#noprint" x="1458" y="189.5"/>
<use href="#pencil" x="1474" y="189"/>
<rect x="1487" y="189.5" width="15" height="11.500" fill="#0000f0"/>
<use href="#eye" x="1443" y="245"/>
<use href="#printer" x="1458" y="244.5"/>
<use href="#pencil" x="1474" y="243"/>
<rect x="1487" y="243.5" width="15" height="11.500" fill="#1a1a1a"/>
<use href="#eye" x="1443" y="281"/>
<use href="#noprint" x="1458" y="279.5"/>
<use href="#pencil" x="1474" y="279"/>
<rect x="1487" y="279.5" width="15" height="11.500" fill="#0000f0"/>
<use href="#eye" x="1443" y="299"/>
<use href="#noprint" x="1458" y="297.5"/>
<use href="#pencil" x="1474" y="297"/>
<rect x="1487" y="297.5" width="15" height="11.500" fill="#1a1a1a"/>
<use href="#eyeoff" x="1443" y="317"/>
<use href="#noprint" x="1458" y="315.5"/>
<use href="#nopencil" x="1474" y="315"/>
<rect x="1487" y="315.5" width="15" height="11.500" fill="#c8c8c8"/>
<ellipse cx="1468" cy="212.700" rx="6.600" ry="5.100" fill="#e22a1a" stroke="#5a1410" stroke-width="1"/>
<rect x="1461" y="224" width="15" height="15" fill="#d8dcf0"/><path d="M1462 228l4 6 3-7 4 8M1464 237l5-4 5 2" stroke="#8a90c8" stroke-width="1.200" fill="none"/>
<rect x="1464.500" y="226.500" width="9" height="9.500" fill="none" stroke="#1a1a28" stroke-width="1.200"/>
<g fill="#fff" stroke="#1a1a28" stroke-width="1"><circle cx="1464.500" cy="226.500" r="1.500"/><circle cx="1473.500" cy="226.500" r="1.500"/><circle cx="1464.500" cy="236" r="1.500"/><circle cx="1473.500" cy="236" r="1.500"/></g>
<path d="M1461 226.500h2M1475 226.500h2M1461 236h2M1475 236h2M1464.500 223v2M1473.500 223v2M1464.500 237.500v2M1473.500 237.500v2" stroke="#1a1a28" stroke-width="1"/>
<rect x="1401.5" y="942.500" width="20" height="21" rx="3" fill="url(#gBtn)" stroke="#8c8c8c"/>
<rect x="1425.5" y="942.500" width="20" height="21" rx="3" fill="url(#gBtn)" stroke="#8c8c8c"/>
<rect x="1449.5" y="942.500" width="20" height="21" rx="3" fill="url(#gBtn)" stroke="#8c8c8c"/>
<rect x="1473.5" y="942.500" width="20" height="21" rx="3" fill="url(#gBtn)" stroke="#c4c4c4"/>
<rect x="1634.500" y="942.500" width="20" height="21" rx="3" fill="url(#gBtn)" stroke="#8c8c8c"/>
<g fill="#e4e8f4" stroke="#40507a" stroke-width="0.800"><path d="M1404 950l3-3h9l-3 3zM1404 954l3-3h9l-3 3zM1404 958l3-3h9l-3 3z"/></g><circle cx="1416" cy="948" r="2.600" fill="#2f9a21"/>
<g fill="#e4e8f4" stroke="#40507a" stroke-width="0.800"><path d="M1432 954l3-3h8l-3 3zM1432 958l3-3h8l-3 3z"/></g><circle cx="1441" cy="948" r="2.600" fill="#2f9a21"/><path d="M1435 955l5-6 2 2-5 5.500z" fill="#d88a2a"/><g fill="#40507a" font-size="5" font-family="Liberation Sans"><text x="1427" y="950">1</text><text x="1427" y="955">3</text><text x="1427" y="960">5</text></g>
<g fill="#e4e8f4" stroke="#40507a" stroke-width="0.800"><path d="M1456 954l3-3h8l-3 3zM1456 958l3-3h8l-3 3z"/></g><circle cx="1465" cy="948" r="2.600" fill="#2f9a21"/><path d="M1459 955l5-6 2 2-5 5.500z" fill="#d88a2a"/><g fill="#40507a" font-size="5" font-family="Liberation Sans"><text x="1451" y="950">1</text><text x="1451" y="955">3</text><text x="1451" y="960">5</text></g>
<g fill="#e6e6e6" stroke="#cfcfcf" stroke-width="0.800"><path d="M1480 950l3-3h8l-3 3zM1480 954l3-3h8l-3 3zM1480 958l3-3h8l-3 3z"/></g>
<path d="M1640.500 949.500h9l-.8 10.500h-7.400z" fill="#f0f0f6" stroke="#44445a" stroke-width="1"/><path d="M1639.500 948.500h11M1643 946.500h4" stroke="#44445a" stroke-width="1.200"/><path d="M1643.500 951.500v6.500M1646.500 951.500v6.500" stroke="#44445a" stroke-width="0.900"/>
</svg>
<span class="t tt" style="left:1478px;top:141px;">Strona 1</span>
<span class="t tt" style="left:1478px;top:153px;letter-spacing:-0.27px;">Prowadnice</span>
<span class="t tr" style="left:1441px;top:172px;font-weight:bold;letter-spacing:-0.2px;">Strona 1</span>
<span class="t tr" style="left:1509px;top:190px;font-weight:bold;color:#e01010;letter-spacing:-0.26px;">Prowadnice</span>
<span class="t tr" style="left:1480px;top:208px;color:#fff;letter-spacing:-0.5px;">Elipsa</span>
<span class="t tr" style="left:1479px;top:226px;letter-spacing:-0.075px;">Wypełnienie siatkowe</span>
<span class="t tr" style="left:1509px;top:244px;letter-spacing:-0.39px;">Warstwa 1</span>
<span class="t tr" style="left:1441px;top:262px;font-weight:bold;letter-spacing:-0.14px;">Strona główna</span>
<div style="left:1509px;top:277px;width:147px;height:18px;overflow:hidden;"><span class="t tr" style="left:0;top:3px;font-style:italic;color:#1f4e9c;letter-spacing:-0.2px;">Prowadnice (wszystkie strony)</span></div>
<span class="t tr" style="left:1509px;top:298px;font-style:italic;color:#1f4e9c;">Pulpit</span>
<span class="t tr" style="left:1509px;top:316px;font-style:italic;color:#1f4e9c;">Siatka dokumentu</span>
<!-- palette.html -->
<div id="palette" style="left:1660px;top:116px;width:20px;height:850px;background:#f0f0f0;"></div>
<svg width="20" height="850" style="left:1660px;top:116px" viewBox="1660 116 20 850">
<g fill="#b4b4b4"><rect x="1664" y="120" width="2" height="2"/><rect x="1669" y="120" width="2" height="2"/><rect x="1674" y="120" width="2" height="2"/></g>
<defs><radialGradient id="gCirc" cx="0.4" cy="0.350" r="0.700"><stop offset="0" stop-color="#fff"/><stop offset="1" stop-color="#d8d8d8"/></radialGradient></defs>
<circle cx="1669.500" cy="133" r="6.300" fill="url(#gCirc)" stroke="#9a9a9a" stroke-width="1"/><path d="M1668 130l4.500 3-4.500 3z" fill="#000"/>
<g opacity="0.550"><path d="M1665 155.500l6-6" stroke="#8a8a8a" stroke-width="2.200"/><path d="M1669.500 147.500l4 4" stroke="#7a7a7a" stroke-width="2.600"/><circle cx="1673.300" cy="147.300" r="2" fill="#7a7a7a"/></g>
<path d="M1667 170l3.500-3.800 3.500 3.800z" fill="#8a8a8a"/>
<rect x="1661.500" y="176.500" width="17" height="16" fill="#fff" stroke="#222"/><path d="M1662 177l16 15M1678 177l-16 15" stroke="#222" stroke-width="1"/>
<rect x="1661.700" y="193" width="17" height="17" fill="#1a1a1a"/><rect x="1661.700" y="209" width="17" height="1" fill="#fff" opacity="0.180"/>
<rect x="1661.700" y="210" width="17" height="17" fill="#333333"/><rect x="1661.700" y="226" width="17" height="1" fill="#fff" opacity="0.180"/>
<rect x="1661.700" y="227" width="17" height="17" fill="#4d4d4d"/><rect x="1661.700" y="243" width="17" height="1" fill="#fff" opacity="0.180"/>
<rect x="1661.700" y="244" width="17" height="17" fill="#666666"/><rect x="1661.700" y="260" width="17" height="1" fill="#fff" opacity="0.180"/>
<rect x="1661.700" y="261" width="17" height="17" fill="#808080"/><rect x="1661.700" y="277" width="17" height="1" fill="#fff" opacity="0.180"/>
<rect x="1661.700" y="278" width="17" height="17" fill="#999999"/><rect x="1661.700" y="294" width="17" height="1" fill="#fff" opacity="0.180"/>
<rect x="1661.700" y="295" width="17" height="17" fill="#b3b3b3"/><rect x="1661.700" y="311" width="17" height="1" fill="#fff" opacity="0.180"/>
<rect x="1661.700" y="312" width="17" height="17" fill="#c6c6c6"/><rect x="1661.700" y="328" width="17" height="1" fill="#fff" opacity="0.180"/>
<rect x="1661.700" y="329" width="17" height="17" fill="#d9d9d9"/><rect x="1661.700" y="345" width="17" height="1" fill="#fff" opacity="0.180"/>
<rect x="1661.700" y="346" width="17" height="17" fill="#ececec"/><rect x="1661.700" y="362" width="17" height="1" fill="#fff" opacity="0.180"/>
<rect x="1661.700" y="363" width="17" height="17" fill="#ffffff"/><rect x="1661.700" y="379" width="17" height="1" fill="#fff" opacity="0.180"/>
<rect x="1661.700" y="380" width="17" height="17" fill="#3a2a9a"/><rect x="1661.700" y="396" width="17" height="1" fill="#fff" opacity="0.180"/>
<rect x="1661.700" y="397" width="17" height="17" fill="#0aa0d8"/><rect x="1661.700" y="413" width="17" height="1" fill="#fff" opacity="0.180"/>
<rect x="1661.700" y="414" width="17" height="17" fill="#0aa060"/><rect x="1661.700" y="430" width="17" height="1" fill="#fff" opacity="0.180"/>
<rect x="1661.700" y="431" width="17" height="17" fill="#f8e020"/><rect x="1661.700" y="447" width="17" height="1" fill="#fff" opacity="0.180"/>
<rect x="1661.700" y="448" width="17" height="17" fill="#e02a1e"/><rect x="1661.700" y="464" width="17" height="1" fill="#fff" opacity="0.180"/>
<rect x="1661" y="447" width="19" height="18" fill="#fff"/><rect x="1663.500" y="450.5" width="14" height="13" fill="#e02a1e" stroke="#111" stroke-width="1.400"/>
<rect x="1661.700" y="465" width="17" height="17" fill="#e0108a"/><rect x="1661.700" y="481" width="17" height="1" fill="#fff" opacity="0.180"/>
<rect x="1661.700" y="482" width="17" height="17" fill="#b04090"/><rect x="1661.700" y="498" width="17" height="1" fill="#fff" opacity="0.180"/>
<rect x="1661.700" y="499" width="17" height="17" fill="#f08000"/><rect x="1661.700" y="515" width="17" height="1" fill="#fff" opacity="0.180"/>
<rect x="1661.700" y="516" width="17" height="17" fill="#ffc0c8"/><rect x="1661.700" y="532" width="17" height="1" fill="#fff" opacity="0.180"/>
<rect x="1661.700" y="533" width="17" height="17" fill="#807068"/><rect x="1661.700" y="549" width="17" height="1" fill="#fff" opacity="0.180"/>
<rect x="1661.700" y="550" width="17" height="17" fill="#d8d8f8"/><rect x="1661.700" y="566" width="17" height="1" fill="#fff" opacity="0.180"/>
<rect x="1661.700" y="567" width="17" height="17" fill="#b0a4e4"/><rect x="1661.700" y="583" width="17" height="1" fill="#fff" opacity="0.180"/>
<rect x="1661.700" y="584" width="17" height="17" fill="#7894d4"/><rect x="1661.700" y="600" width="17" height="1" fill="#fff" opacity="0.180"/>
<rect x="1661.700" y="601" width="17" height="17" fill="#8874c8"/><rect x="1661.700" y="617" width="17" height="1" fill="#fff" opacity="0.180"/>
<rect x="1661.700" y="618" width="17" height="17" fill="#9088b8"/><rect x="1661.700" y="634" width="17" height="1" fill="#fff" opacity="0.180"/>
<rect x="1661.700" y="635" width="17" height="17" fill="#506090"/><rect x="1661.700" y="651" width="17" height="1" fill="#fff" opacity="0.180"/>
<rect x="1661.700" y="652" width="17" height="17" fill="#504868"/><rect x="1661.700" y="668" width="17" height="1" fill="#fff" opacity="0.180"/>
<rect x="1661.700" y="669" width="17" height="17" fill="#6880a0"/><rect x="1661.700" y="685" width="17" height="1" fill="#fff" opacity="0.180"/>
<rect x="1661.700" y="686" width="17" height="17" fill="#0890d0"/><rect x="1661.700" y="702" width="17" height="1" fill="#fff" opacity="0.180"/>
<rect x="1661.700" y="703" width="17" height="17" fill="#a4daf2"/><rect x="1661.700" y="719" width="17" height="1" fill="#fff" opacity="0.180"/>
<rect x="1661.700" y="720" width="17" height="17" fill="#b4c8d8"/><rect x="1661.700" y="736" width="17" height="1" fill="#fff" opacity="0.180"/>
<rect x="1661.700" y="737" width="17" height="17" fill="#94a8b0"/><rect x="1661.700" y="753" width="17" height="1" fill="#fff" opacity="0.180"/>
<rect x="1661.700" y="754" width="17" height="17" fill="#687880"/><rect x="1661.700" y="770" width="17" height="1" fill="#fff" opacity="0.180"/>
<rect x="1661.700" y="771" width="17" height="17" fill="#40484e"/><rect x="1661.700" y="787" width="17" height="1" fill="#fff" opacity="0.180"/>
<rect x="1661.700" y="788" width="17" height="17" fill="#507070"/><rect x="1661.700" y="804" width="17" height="1" fill="#fff" opacity="0.180"/>
<rect x="1661.700" y="805" width="17" height="17" fill="#408878"/><rect x="1661.700" y="821" width="17" height="1" fill="#fff" opacity="0.180"/>
<rect x="1661.700" y="822" width="17" height="17" fill="#70a098"/><rect x="1661.700" y="838" width="17" height="1" fill="#fff" opacity="0.180"/>
<rect x="1661.700" y="839" width="17" height="17" fill="#58b0a0"/><rect x="1661.700" y="855" width="17" height="1" fill="#fff" opacity="0.180"/>
<rect x="1661.700" y="856" width="17" height="17" fill="#60a878"/><rect x="1661.700" y="872" width="17" height="1" fill="#fff" opacity="0.180"/>
<rect x="1661.700" y="873" width="17" height="17" fill="#78d8e0"/><rect x="1661.700" y="889" width="17" height="1" fill="#fff" opacity="0.180"/>
<rect x="1661.700" y="890" width="17" height="17" fill="#58b0c0"/><rect x="1661.700" y="906" width="17" height="1" fill="#fff" opacity="0.180"/>
<rect x="1661.700" y="907" width="17" height="17" fill="#b4c8b8"/><rect x="1661.700" y="923" width="17" height="1" fill="#fff" opacity="0.180"/>
<rect x="1661.500" y="193" width="1" height="731" fill="#8a8a8a" opacity="0.500"/>
<path d="M1667 931l3.500 3.800 3.500-3.800z" fill="#555"/>
<path d="M1666.500 945v10" stroke="#000" stroke-width="1.600"/><path d="M1674 945v10l-6-5z" fill="#000"/>
</svg>
<!-- statusbar.html -->
<div id="statusbar" style="left:0;top:966px;width:1680px;height:43px;background:linear-gradient(#ffffff 0px,#f9f9f9 4px,#f2f2f2 9px,#f0f0f0 14px,#f0f0f0 100%);"></div>
<span class="t tt" style="left:5px;top:971px;word-spacing:1.2px;">( 3,759 ; 0,033 )</span>
<span class="t tt" id="st2" style="left:4px;top:992px;letter-spacing:-0.193px;">Profile kolorów dokumentu: RGB: sRGB IEC61966-2.1; CMYK: ISO Coated v2 (ECI); Skala szarości: Dot Gain 15%</span>
<span class="t tt" id="st3" style="left:687px;top:971px;letter-spacing:-0.265px;">Elipsa na Prowadnice</span>
<span class="t tt" id="st4" style="left:1479px;top:972px;letter-spacing:-0.12px;">C:0 M:100 Y:100 K:0</span>
<span class="t tt" id="st5" style="left:1479px;top:993px;letter-spacing:-0.15px;">C:0 M:0 Y:0 K:100&nbsp; 0,200 mm</span>
<svg width="1680" height="43" style="left:0;top:966px" viewBox="0 966 1680 43">
  <path d="M119 971l4.500 4.500-4.500 4.500z" fill="#000"/>
  <path d="M553 992l4.500 4.500-4.500 4.500z" fill="#000"/>
  <!-- monitor icon -->
  <rect x="1363.500" y="970.500" width="13" height="10" rx="1" fill="#c8c8dc" stroke="#7a7a9a"/>
  <rect x="1365.500" y="972.500" width="9" height="6" fill="#e8e8f4" stroke="#c06a7a" stroke-width="0.800"/>
  <circle cx="1370" cy="975.500" r="1.600" fill="none" stroke="#5a6aa0" stroke-width="0.900"/>
  <path d="M1367 983.500h6" stroke="#7a7a9a" stroke-width="1.200"/>
  <path d="M1432.500 970v12" stroke="#c8c8c8" stroke-width="1"/>
  <!-- fill bucket -->
  <path d="M1437.500 977l6.500-6.500 6 6-5.500 7.500h-2.500z" fill="#fff" stroke="#333" stroke-width="1.100"/>
  <path d="M1438.500 978h10.500l-4.700 5.500h-2z" fill="#e07a14"/>
  <path d="M1442 969.500l3 3" stroke="#333" stroke-width="1.100"/>
  <path d="M1449.500 977h2.700v5" fill="none" stroke="#e07a14" stroke-width="1.800"/>
  <rect x="1458.500" y="968.500" width="17" height="16" fill="#e02a1e" stroke="#b8b8b8"/>
  <!-- pen -->
  <path d="M1445 990.500c-2 3.400-3.300 5.600-3.300 8 0 1.600.9 2.800 1.700 3.400h3.200c.8-.6 1.700-1.800 1.700-3.400 0-2.400-1.300-4.600-3.300-8z" fill="#fff" stroke="#333345" stroke-width="1"/>
  <path d="M1445 993.500v5.500" stroke="#333345" stroke-width="1"/>
  <rect x="1441" y="1003.300" width="8.500" height="1.500" fill="#555"/>
  <rect x="1458.500" y="989.500" width="17" height="16" fill="#1a1a1a" stroke="#b8b8b8"/>
  <!-- user icon -->
  <rect x="1655.500" y="973.500" width="15" height="15" fill="#e4e4e4" stroke="#b0b0b0"/>
  <circle cx="1663" cy="978.500" r="3" fill="#d8541c"/>
  <path d="M1657 988c0-4 2.500-5.500 6-5.500s6 1.500 6 5.500z" fill="#d8541c"/>
  <path d="M1672 984v4.500h-4.500z" fill="#111"/>
</svg>

<!-- taskbar.html -->
<div id="taskbar" style="left:0;top:1009px;width:1680px;height:41px;background:#0d0f13;overflow:hidden;">
  <svg width="1680" height="41" style="left:0;top:0" viewBox="0 1009 1680 41">
    <defs>
      <linearGradient id="gTk" x1="0" y1="0" x2="0" y2="1"><stop offset="0" stop-color="#8a8f96"/><stop offset="0.040" stop-color="#2a2e34"/><stop offset="0.150" stop-color="#14171c"/><stop offset="1" stop-color="#0b0d11"/></linearGradient>
      <linearGradient id="gBtnT" x1="0" y1="0" x2="0" y2="1"><stop offset="0" stop-color="#666a70"/><stop offset="0.450" stop-color="#42464c"/><stop offset="0.500" stop-color="#25292e"/><stop offset="1" stop-color="#2e3238"/></linearGradient>
      <linearGradient id="gBtnA" x1="0" y1="0" x2="0" y2="1"><stop offset="0" stop-color="#b4b8bc"/><stop offset="0.450" stop-color="#8e9296"/><stop offset="0.500" stop-color="#64686c"/><stop offset="1" stop-color="#8a8e92"/></linearGradient>
      <radialGradient id="gOrb" cx="0.500" cy="0.350" r="0.700"><stop offset="0" stop-color="#7ac4f0"/><stop offset="0.500" stop-color="#2a78c0"/><stop offset="1" stop-color="#0c2a5a"/></radialGradient>
      <filter id="tkb"><feGaussianBlur stdDeviation="8"/></filter>
    </defs>
    <rect x="0" y="1009" width="1680" height="41" fill="url(#gTk)"/>
    <g filter="url(#tkb)" opacity="0.550">
      <polygon points="640,1050 720,1009 790,1009 700,1050" fill="#2c3138"/>
      <polygon points="900,1050 1000,1009 1060,1009 960,1050" fill="#262b32"/>
      <polygon points="1130,1050 1230,1009 1300,1009 1200,1050" fill="#2c3138"/>
      <polygon points="330,1050 400,1009 440,1009 380,1050" fill="#22262c"/>
    </g>
    <!-- task buttons -->
    <g stroke="#0a0a0c" stroke-width="1">
      <rect x="60.500" y="1010.500" width="57" height="38" rx="3" fill="url(#gBtnT)"/>
      <rect x="176.500" y="1010.500" width="4" height="38" rx="1" fill="#3a3e44"/>
      <rect x="172.500" y="1010.500" width="4" height="38" rx="1" fill="#4a4e54"/>
      <rect x="122.500" y="1010.500" width="50" height="38" rx="3" fill="url(#gBtnA)"/>
      <rect x="184.500" y="1010.500" width="53" height="38" rx="3" fill="url(#gBtnT)"/>
      <rect x="237.500" y="1010.500" width="4" height="38" rx="1" fill="#3a3e44"/>
      <rect x="246.500" y="1010.500" width="57" height="38" rx="3" fill="url(#gBtnT)"/>
    </g>
    <g fill="none" stroke="rgba(255,255,255,0.300)" stroke-width="1">
      <rect x="61.500" y="1011.500" width="55" height="36" rx="2"/><rect x="123.500" y="1011.500" width="48" height="36" rx="2"/><rect x="185.500" y="1011.500" width="51" height="36" rx="2"/><rect x="247.500" y="1011.500" width="55" height="36" rx="2"/>
    </g>
    <!-- start orb -->
    <circle cx="27" cy="1029.500" r="19" fill="#0a1a30" opacity="0.800"/>
    <circle cx="27" cy="1029.500" r="17.500" fill="url(#gOrb)" stroke="#9ac8e8" stroke-width="1.200"/>
    <ellipse cx="27" cy="1021" rx="13" ry="7" fill="#fff" opacity="0.250"/>
    <g>
      <path d="M19 1023c2.500-1.200 4.500-1 7 .3l-1.500 5.500c-2.500-1.300-4.500-1.500-7-.3z" fill="#e8582a"/>
      <path d="M27.500 1023.800c2.500 1.200 4.500 1.200 7.500-.3l-1.500 5.500c-3 1.500-5 1.500-7.500.3z" fill="#7ab83a"/>
      <path d="M17 1030c2.500-1.200 4.500-1 7 .3l-1.500 5.500c-2.500-1.300-4.500-1.500-7-.3z" fill="#3a9ae0"/>
      <path d="M25.500 1030.800c2.500 1.200 4.500 1.200 7.500-.3l-1.500 5.500c-3 1.500-5 1.500-7.500.3z" fill="#f4c428"/>
    </g>
    <!-- chrome -->
    <circle cx="89" cy="1029.500" r="15" fill="#e33b2e"/>
    <path d="M89 1029.500L76 1022a15 15 0 0 0 5.500 20.500z" fill="#2da94f" />
    <path d="M89 1029.500l-7.500 13A15 15 0 0 0 102 1022z" fill="#fdd23e" transform="rotate(0)"/>
    <path d="M76 1022a15 15 0 0 1 26 0H89z" fill="#e33b2e"/>
    <path d="M76 1022a15 15 0 0 0 5.500 20.500L89 1029.500z" fill="#2da94f"/>
    <path d="M102 1022a15 15 0 0 1-20.500 20.500L89 1029.500z" fill="#fdd23e"/>
    <circle cx="89" cy="1029.500" r="7" fill="#f4f4f4"/>
    <circle cx="89" cy="1029.500" r="5.500" fill="#4a8af4"/>
    <!-- corel balloon -->
    <path d="M147 1047c-9-7-14-14-14-22 0-7 6-12 14-12s14 5 14 12c0 8-5 15-14 22z" fill="#7cc43a"/>
    <path d="M140 1015c-2 8-1 20 7 32M147 1013v34M154 1015c2 8 1 20-7 32" stroke="#4a8a1e" stroke-width="1.500" fill="none" opacity="0.700"/>
    <path d="M133 1025c0-7 6-12 14-12" stroke="#b4e47a" stroke-width="2" fill="none"/>
    <path d="M137 1016l4-2.500 12 14-5 4z" fill="#fff" stroke="#4a6a2a" stroke-width="0.800"/>
    <path d="M148 1031.500l5-4 3 8.500z" fill="#f4f4f4" stroke="#4a6a2a" stroke-width="0.800"/>
    <!-- explorer -->
    <path d="M194 1020h10l2 2.500h22v21h-34z" fill="#f0cf6e" stroke="#b89430" stroke-width="1"/>
    <path d="M196 1018h12l2 2h16v4h-30z" fill="#f8e6a0" stroke="#c8a850" stroke-width="0.800"/>
    <rect x="198" y="1017" width="3" height="2" fill="#2ea84a"/><rect x="206" y="1019" width="3" height="2" fill="#e04a2a"/><rect x="214" y="1020" width="3" height="2" fill="#3a8ae0"/>
    <path d="M194 1026h34v17.500h-34z" fill="#f4d884" stroke="#b89430" stroke-width="1"/>
    <path d="M199 1036c0-2 1-3 3-3h18c2 0 3 1 3 3v10h-5v-7h-14v7h-5z" fill="#7ac0ec" stroke="#3a80b8" stroke-width="0.800"/>
    <path d="M204 1039h14v2h-14z" fill="#c8e8fa"/>
    <!-- notepad -->
    <path d="M266 1018l20-2 -5 28-22-1z" fill="#8ac4dc" stroke="#4a7a90" stroke-width="0.800"/>
    <path d="M271 1019l18-1.500-6 26-18-.500z" fill="#bfe2f0" stroke="#5a8aa0" stroke-width="0.800"/>
    <path d="M289 1017.500l-6 26 3-1.500 5-24z" fill="#e8e8e8" stroke="#8a8a8a" stroke-width="0.600"/>
    <path d="M270 1016.500v3M273 1016.200v3M276 1016v3M279 1015.800v3M282 1015.500v3M285 1015.300v3" stroke="#3a4a5a" stroke-width="1.200"/>
    <!-- tray -->
    <g fill="#f0f0f0">
      <rect x="1443.500" y="1025.500" width="13" height="8" rx="1" fill="none" stroke="#e8e8e8" stroke-width="1"/>
      <path d="M1445 1028h10M1445 1030h10M1446 1032h8" stroke="#e8e8e8" stroke-width="0.900" stroke-dasharray="1.300 0.700"/>
      <path d="M1447 1025c0-2 2-2 3-2s2 0 4-1.500" fill="none" stroke="#e8e8e8" stroke-width="1"/>
      <path d="M1470 1033.500l3.700-4 3.700 4z"/>
      <path d="M1492 1024v14" stroke="#f0f0f0" stroke-width="1.500"/>
      <path d="M1493 1024.500c3-1.500 5 1 8.500 0v7c-3.500 1-5.500-1.500-8.500 0z"/>
      <circle cx="1501" cy="1034.500" r="4.200" fill="#d82a1e" stroke="#fff" stroke-width="0.600"/>
      <path d="M1499 1032.500l4 4M1503 1032.500l-4 4" stroke="#fff" stroke-width="1.300"/>
      <rect x="1516.500" y="1025.500" width="8" height="11" rx="1" fill="none" stroke="#d8d8d8" stroke-width="1"/>
      <path d="M1522 1023v3M1526 1023v3" stroke="#f0f0f0" stroke-width="1.400"/><path d="M1520.500 1026h7v3.500c0 1.500-1.500 2.500-3.500 2.500s-3.500-1-3.500-2.500z"/><path d="M1524 1032v4" stroke="#f0f0f0" stroke-width="1.400"/>
      <path d="M1516 1030l7 7M1523 1030l-7 7" stroke="#e0281c" stroke-width="2"/>
      <rect x="1545.500" y="1026.500" width="10" height="8" fill="#0d0f13" stroke="#f0f0f0" stroke-width="1.400"/><path d="M1547 1037.500h7M1550.500 1035v2.500" stroke="#f0f0f0" stroke-width="1.300"/>
      <path d="M1541 1023.500v5h3v-5M1542.500 1028.500v6.500h3" fill="none" stroke="#f0f0f0" stroke-width="1.300"/>
      <path d="M1563 1028h3l4-4v12l-4-4h-3z"/>
      <path d="M1572 1027.500c1 1.500 1 3.500 0 5M1574.500 1025.500c2 2.500 2 6.500 0 9" fill="none" stroke="#f0f0f0" stroke-width="1.100"/>
    </g>
    <!-- show desktop -->
    <rect x="1667.500" y="1009.500" width="13" height="41" fill="rgba(255,255,255,0.080)" stroke="#5a5e66" stroke-width="1"/>
    <rect x="1668.500" y="1010.500" width="5" height="18" fill="rgba(255,255,255,0.120)"/>
  </svg>
  <span class="t" style="left:1421px;top:15px;font-size:11px;color:#fff;">PL</span>
  <span class="t" style="left:1611px;top:9px;font-size:11px;color:#fff;" id="clk1">17:10</span>
  <span class="t" style="left:1596px;top:26px;font-size:11px;color:#fff;" id="clk2">2016-07-10</span>
</div>

</div>
</body></html>
